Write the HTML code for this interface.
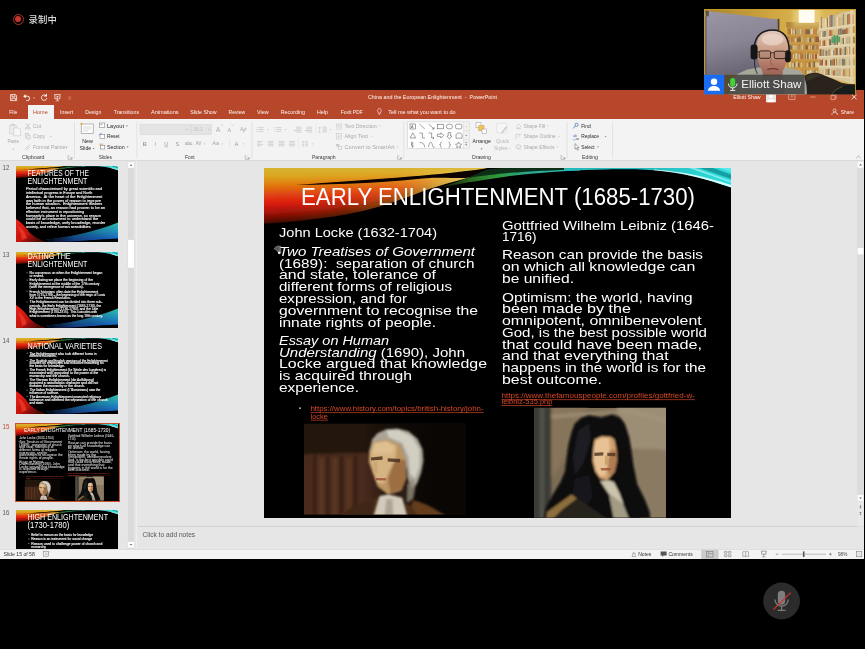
<!DOCTYPE html>
<html lang="en">
<head>
<meta charset="utf-8">
<title>China and the European Enlightenment - PowerPoint</title>
<style>
*{margin:0;padding:0;box-sizing:border-box}
html,body{width:865px;height:649px;background:#000;overflow:hidden}
body{position:relative;font-family:"Liberation Sans","Noto Sans CJK SC",sans-serif;color:#fff}
.abs{position:absolute}
svg{position:absolute;overflow:hidden;display:block}
svg text{font-family:"Liberation Sans","Noto Sans CJK SC",sans-serif}
#rec{left:12.8px;top:13.6px;width:11px;height:11px;border:1.2px solid #a9322b;border-radius:50%}
#rec i{position:absolute;left:1.3px;top:1.3px;width:6px;height:6px;border-radius:50%;background:#cb352e}
#rectxt{left:28.6px;top:12.5px;font-size:9.4px;line-height:13px;font-weight:500;color:#dcdcdc;letter-spacing:.1px;filter:blur(.25px)}
#win{left:0;top:90px;width:864px;height:469px;background:#e6e6e6;overflow:hidden}
#tbar{left:0;top:0;width:864px;height:29px;background:#b7472a}
#hometab{left:28px;top:15px;width:26px;height:15px;background:#f3f3f3}
#ribbon{left:0;top:29px;width:864px;height:42px;background:#f3f3f3;border-bottom:1px solid #d9d9d9}
#leftpane{left:0;top:71px;width:137px;height:388px;background:#e6e6e6;border-right:1px solid #efefef;overflow:hidden}
#lscroll{left:128px;top:72px;width:6px;height:387px;background:#dadada}
#rscroll{left:857px;top:71px;width:7px;height:366px;background:#dcdcdc}
#notes{left:138px;top:436px;width:726px;height:23px;background:#e6e6e6;border-top:1px solid #d2d2d2}
#status{left:0;top:459px;width:864px;height:10px;background:#f3f3f3;border-top:1px solid #dfdfdf}
#slide{left:264px;top:167.7px;width:467px;height:350.3px;background:#000;overflow:hidden}
#chrome{left:0;top:0;width:865px;height:649px}
.thumb{position:absolute;left:16px;width:102px;height:76px;background:#000;overflow:hidden}
.thumb .in{position:absolute;left:0;top:0;width:408px;height:304px;transform:scale(.25);transform-origin:0 0;color:#fff}
.thumb h3{position:absolute;font-weight:400;font-size:22px;line-height:24px;white-space:nowrap;transform-origin:0 0}
.thumb p,.thumb li{font-size:10.5px;line-height:11.6px;white-space:nowrap}
.thumb ul{list-style:none}
.num{position:absolute;left:3px;font-size:6.5px;color:#555;line-height:8px}
</style>
</head>
<body>
<!-- recording indicator -->
<div id="rec" class="abs"><i></i></div>
<div id="rectxt" class="abs">录制中</div>

<!-- PowerPoint window -->
<div id="win" class="abs">
  <div id="tbar" class="abs"></div>
  <div id="hometab" class="abs"></div>
  <div id="ribbon" class="abs"></div>
  <div id="leftpane" class="abs"></div>
  <div id="lscroll" class="abs"></div>
  <div id="rscroll" class="abs"></div>
  <div id="notes" class="abs"></div>
  <div id="status" class="abs"></div>
</div>

<!-- slide thumbnails -->
<svg class="thumbsvg" width="102" height="76" viewBox="0 0 102 76" style="left:16px;top:166px"><defs>
<linearGradient id="t12gB" gradientUnits="userSpaceOnUse" x1="20" y1="0" x2="223" y2="0">
 <stop offset="0" stop-color="#e39a1c" stop-opacity="0"/><stop offset=".3" stop-color="#e49c1e" stop-opacity=".12"/><stop offset=".55" stop-color="#e6a828" stop-opacity=".42"/><stop offset=".75" stop-color="#e8c444" stop-opacity=".8"/><stop offset=".9" stop-color="#ecd868" stop-opacity=".95"/><stop offset="1" stop-color="#e6e080" stop-opacity="1"/>
</linearGradient>
<linearGradient id="t12gG" gradientUnits="userSpaceOnUse" x1="176" y1="19" x2="316" y2="1">
 <stop offset="0" stop-color="#26300c" stop-opacity=".6"/><stop offset=".22" stop-color="#2c6a22"/><stop offset=".42" stop-color="#2f9a3c"/><stop offset=".62" stop-color="#2aa68a"/><stop offset="1" stop-color="#2fc6c4"/>
</linearGradient>
<linearGradient id="t12gC" gradientUnits="userSpaceOnUse" x1="380" y1="0" x2="467" y2="0">
 <stop offset="0" stop-color="#25b9bb"/><stop offset="1" stop-color="#2fdede"/>
</linearGradient>
<linearGradient id="t12gTop" gradientUnits="userSpaceOnUse" x1="0" y1="0" x2="0" y2="12">
 <stop offset="0" stop-color="#d8b534" stop-opacity=".85"/><stop offset="1" stop-color="#e2b030" stop-opacity="0"/>
</linearGradient>
<filter id="t12b1" x="-5%" y="-20%" width="110%" height="140%"><feGaussianBlur stdDeviation=".6"/></filter>
<filter id="t12b2" x="-10%" y="-10%" width="120%" height="120%"><feGaussianBlur stdDeviation="1.6"/></filter>
<filter id="t12b3" x="-10%" y="-10%" width="120%" height="120%"><feGaussianBlur stdDeviation="3"/></filter>
<clipPath id="t12cpS"><path d="M0,0 H223 L204,9.7 L183,15.6 L166,20.8 C155,24.6 146,28.4 135.4,32 C124,36 112,39.6 100.7,42.6 C88,45.6 78,47.4 66,49 L51.5,51 C40,52.6 20,54.8 0,55.6 Z"/></clipPath></defs><rect width="102" height="76" fill="#000"/><g transform="scale(.2184)"><g clip-path="url(#t12cpS)">
<rect x="-5" y="-5" width="240" height="70" fill="#2a0402"/>
<g filter="url(#t12b3)">
<path d="M-8,-8 H223 L223,0.00 L204,9.70 L183,15.60 L166,20.80 L135.4,32.00 L100.7,42.60 L66,49.00 L51.5,51.00 L25,53.80 L0,55.60 L-8,55.60 Z" fill="#4a0804" opacity="1"/>
<path d="M-8,-8 H223 L223,0.00 L204,9.12 L183,14.66 L166,19.55 L135.4,30.08 L100.7,40.04 L66,46.06 L51.5,47.94 L25,50.57 L0,52.26 L-8,52.26 Z" fill="#7a0e06" opacity="1"/>
<path d="M-8,-8 H223 L223,0.00 L204,8.15 L183,13.10 L166,17.47 L135.4,26.88 L100.7,35.78 L66,41.16 L51.5,42.84 L25,45.19 L0,46.70 L-8,46.70 Z" fill="#b0140a" opacity="1"/>
<path d="M-8,-8 H223 L223,0.00 L204,6.79 L183,10.92 L166,14.56 L135.4,22.40 L100.7,29.82 L66,34.30 L51.5,35.70 L25,37.66 L0,38.92 L-8,38.92 Z" fill="#e01b10" opacity="1"/>
<path d="M-8,-8 H223 L223,0.00 L204,5.33 L183,8.58 L166,11.44 L135.4,17.60 L100.7,23.43 L66,26.95 L51.5,28.05 L25,29.59 L0,30.58 L-8,30.58 Z" fill="#df3f12" opacity="1"/>
<path d="M-8,-8 H223 L223,0.00 L204,4.07 L183,6.55 L166,8.74 L135.4,13.44 L100.7,17.89 L66,20.58 L51.5,21.42 L25,22.60 L0,23.35 L-8,23.35 Z" fill="#e06c10" opacity="1"/>
<path d="M-8,-8 H223 L223,0.00 L204,2.72 L183,4.37 L166,5.82 L135.4,8.96 L100.7,11.93 L66,13.72 L51.5,14.28 L25,15.06 L0,15.57 L-8,15.57 Z" fill="#e09614" opacity="1"/>
<path d="M-8,-8 H223 L223,0.00 L204,1.45 L183,2.34 L166,3.12 L135.4,4.80 L100.7,6.39 L66,7.35 L51.5,7.65 L25,8.07 L0,8.34 L-8,8.34 Z" fill="#d2a81e" opacity="1"/>
</g>
<rect x="-5" y="-5" width="240" height="70" fill="url(#t12gB)"/>
<rect x="-5" y="-2" width="240" height="16" fill="url(#t12gTop)"/>
</g>
<g filter="url(#t12b1)">
<path d="M32,16.7 C45,16 55,15.3 66,14.5 C90,12.8 112,11.2 135,9.5 C150,8.3 164,7 176,6 C192,4.4 208,2.6 223,0.3 L240,0 L204,9.7 C198,10 192,10 187,10 C180,10 172,9.8 166,9.9 C156,10.6 146,11.6 135,12.7 C112,14.6 90,15.6 66,16.2 C55,16.5 45,16.8 32,16.8 Z" fill="#070503"/>
<path d="M204,9.7 L223,1.6 L240,0 L316,0 L316,1.2 C290,2.4 262,3.8 250,4.8 C232,6.2 218,8 204,9.7 Z" fill="#0c2e17"/>
<path d="M176,19.3 C200,15 225,11 246,8 C270,5 295,3.4 316,2.5 L316,1 C290,2.2 262,3.6 250,4.6 C232,6 218,7.8 204,9.7 C196,12.6 186,16 176,19.3 Z" fill="url(#t12gG)"/>
<path d="M300,0 L467,0 L467,19.6 C440,10.5 420,5.2 395,2.6 C372,0.9 360,1.2 343,1.4 C330,1.6 316,2.2 300,2.8 Z" fill="url(#t12gC)"/>
<path d="M390,2.2 C420,5 440,10.2 467,19.4 L467,17 C440,8.5 420,3.8 390,1.6 Z" fill="#e9ffff" opacity=".9"/>
<path d="M436,0 L467,11 L467,6.5 L449,0 Z" fill="#118f94" opacity=".8"/>
<path d="M455,0 L467,4 L467,0 Z" fill="#5fe8e8" opacity=".9"/>
<path d="M425,0 L467,14.5 L467,13 L431,0 Z" fill="#bff8f8" opacity=".6"/>
</g></g><defs>
<linearGradient id="t12r" gradientUnits="userSpaceOnUse" x1="0" y1="54" x2="22" y2="76"><stop offset="0" stop-color="#e8231a"/><stop offset=".55" stop-color="#c4140c"/><stop offset="1" stop-color="#4a0805"/></linearGradient>
<linearGradient id="t12b" gradientUnits="userSpaceOnUse" x1="0" y1="58" x2="0" y2="76"><stop offset="0" stop-color="#2fb9ae"/><stop offset=".45" stop-color="#1f8fc0"/><stop offset="1" stop-color="#1a4fc2"/></linearGradient>
<linearGradient id="t12f" gradientUnits="userSpaceOnUse" x1="28" y1="0" x2="102" y2="0"><stop offset="0" stop-color="#000" stop-opacity="1"/><stop offset=".4" stop-color="#000" stop-opacity=".35"/><stop offset="1" stop-color="#000" stop-opacity="0"/></linearGradient>
<filter id="t12bl" x="-10%" y="-10%" width="120%" height="120%"><feGaussianBlur stdDeviation=".45"/></filter>
</defs>
<g filter="url(#t12bl)">
<path d="M0,53 C5,56 9,60 13,66 C17,70 22,73 30,76 H0 Z" fill="url(#t12r)"/>
<path d="M2,60 C6,62 9,66 11,72 L6,74 C5,68 4,64 2,60 Z" fill="#ff4a3a" opacity=".55"/>
<path d="M30,73.5 C50,72 78,66 102,56.5 V73 C80,73 60,76 40,76 H32 Z" fill="url(#t12b)"/>
<path d="M30,73.5 C50,72 78,66 102,56.5 V76 H30 Z" fill="url(#t12f)"/>
<path d="M60,76 C78,74 92,73 102,72.4 V76 Z" fill="#000" opacity=".9"/>
</g><filter id="t12tb" x="-2%" y="-2%" width="104%" height="104%"><feGaussianBlur stdDeviation=".16"/></filter><g filter="url(#t12tb)"><text x="11.5" y="9.8" font-size="8.2" fill="#fff" textLength="61.5" lengthAdjust="spacingAndGlyphs">FEATURES OF THE</text><text x="11.5" y="17.5" font-size="8.2" fill="#fff" textLength="59.9" lengthAdjust="spacingAndGlyphs">ENLIGHTENMENT</text><text x="9.9" y="24.2" font-size="3.3" fill="#fff" textLength="76.4" lengthAdjust="spacingAndGlyphs" stroke="#fff" stroke-width=".1">Period characterised by great scientific and</text><text x="9.9" y="27.97" font-size="3.3" fill="#fff" textLength="66.3" lengthAdjust="spacingAndGlyphs" stroke="#fff" stroke-width=".1">intellectual progress in Europe and North</text><text x="9.9" y="31.74" font-size="3.3" fill="#fff" textLength="76.4" lengthAdjust="spacingAndGlyphs" stroke="#fff" stroke-width=".1">America.  At the heart of the Enlightenment</text><text x="9.9" y="35.51" font-size="3.3" fill="#fff" textLength="75.1" lengthAdjust="spacingAndGlyphs" stroke="#fff" stroke-width=".1">was faith in the power of reason to improve</text><text x="9.9" y="39.28" font-size="3.3" fill="#fff" textLength="76.4" lengthAdjust="spacingAndGlyphs" stroke="#fff" stroke-width=".1">the human situation.  Enlightenment thinkers</text><text x="9.9" y="43.05" font-size="3.3" fill="#fff" textLength="79.3" lengthAdjust="spacingAndGlyphs" stroke="#fff" stroke-width=".1">believed that, as reason had proven to be an</text><text x="9.9" y="46.82" font-size="3.3" fill="#fff" textLength="58.1" lengthAdjust="spacingAndGlyphs" stroke="#fff" stroke-width=".1">effective instrument in repositioning</text><text x="9.9" y="50.59" font-size="3.3" fill="#fff" textLength="75.1" lengthAdjust="spacingAndGlyphs" stroke="#fff" stroke-width=".1">humanity’s place in the universe, so reason</text><text x="9.9" y="54.36" font-size="3.3" fill="#fff" textLength="72.3" lengthAdjust="spacingAndGlyphs" stroke="#fff" stroke-width=".1">could be an instrument to understand the</text><text x="9.9" y="58.13" font-size="3.3" fill="#fff" textLength="79.3" lengthAdjust="spacingAndGlyphs" stroke="#fff" stroke-width=".1">basis of knowledge, unify knowledge, reorder</text><text x="9.9" y="61.9" font-size="3.3" fill="#fff" textLength="65.5" lengthAdjust="spacingAndGlyphs" stroke="#fff" stroke-width=".1">society, and refine human sensibilities.</text></g></svg>
<svg class="thumbsvg" width="102" height="76" viewBox="0 0 102 76" style="left:16px;top:252.3px"><defs>
<linearGradient id="t13gB" gradientUnits="userSpaceOnUse" x1="20" y1="0" x2="223" y2="0">
 <stop offset="0" stop-color="#e39a1c" stop-opacity="0"/><stop offset=".3" stop-color="#e49c1e" stop-opacity=".12"/><stop offset=".55" stop-color="#e6a828" stop-opacity=".42"/><stop offset=".75" stop-color="#e8c444" stop-opacity=".8"/><stop offset=".9" stop-color="#ecd868" stop-opacity=".95"/><stop offset="1" stop-color="#e6e080" stop-opacity="1"/>
</linearGradient>
<linearGradient id="t13gG" gradientUnits="userSpaceOnUse" x1="176" y1="19" x2="316" y2="1">
 <stop offset="0" stop-color="#26300c" stop-opacity=".6"/><stop offset=".22" stop-color="#2c6a22"/><stop offset=".42" stop-color="#2f9a3c"/><stop offset=".62" stop-color="#2aa68a"/><stop offset="1" stop-color="#2fc6c4"/>
</linearGradient>
<linearGradient id="t13gC" gradientUnits="userSpaceOnUse" x1="380" y1="0" x2="467" y2="0">
 <stop offset="0" stop-color="#25b9bb"/><stop offset="1" stop-color="#2fdede"/>
</linearGradient>
<linearGradient id="t13gTop" gradientUnits="userSpaceOnUse" x1="0" y1="0" x2="0" y2="12">
 <stop offset="0" stop-color="#d8b534" stop-opacity=".85"/><stop offset="1" stop-color="#e2b030" stop-opacity="0"/>
</linearGradient>
<filter id="t13b1" x="-5%" y="-20%" width="110%" height="140%"><feGaussianBlur stdDeviation=".6"/></filter>
<filter id="t13b2" x="-10%" y="-10%" width="120%" height="120%"><feGaussianBlur stdDeviation="1.6"/></filter>
<filter id="t13b3" x="-10%" y="-10%" width="120%" height="120%"><feGaussianBlur stdDeviation="3"/></filter>
<clipPath id="t13cpS"><path d="M0,0 H223 L204,9.7 L183,15.6 L166,20.8 C155,24.6 146,28.4 135.4,32 C124,36 112,39.6 100.7,42.6 C88,45.6 78,47.4 66,49 L51.5,51 C40,52.6 20,54.8 0,55.6 Z"/></clipPath></defs><rect width="102" height="76" fill="#000"/><g transform="scale(.2184)"><g clip-path="url(#t13cpS)">
<rect x="-5" y="-5" width="240" height="70" fill="#2a0402"/>
<g filter="url(#t13b3)">
<path d="M-8,-8 H223 L223,0.00 L204,9.70 L183,15.60 L166,20.80 L135.4,32.00 L100.7,42.60 L66,49.00 L51.5,51.00 L25,53.80 L0,55.60 L-8,55.60 Z" fill="#4a0804" opacity="1"/>
<path d="M-8,-8 H223 L223,0.00 L204,9.12 L183,14.66 L166,19.55 L135.4,30.08 L100.7,40.04 L66,46.06 L51.5,47.94 L25,50.57 L0,52.26 L-8,52.26 Z" fill="#7a0e06" opacity="1"/>
<path d="M-8,-8 H223 L223,0.00 L204,8.15 L183,13.10 L166,17.47 L135.4,26.88 L100.7,35.78 L66,41.16 L51.5,42.84 L25,45.19 L0,46.70 L-8,46.70 Z" fill="#b0140a" opacity="1"/>
<path d="M-8,-8 H223 L223,0.00 L204,6.79 L183,10.92 L166,14.56 L135.4,22.40 L100.7,29.82 L66,34.30 L51.5,35.70 L25,37.66 L0,38.92 L-8,38.92 Z" fill="#e01b10" opacity="1"/>
<path d="M-8,-8 H223 L223,0.00 L204,5.33 L183,8.58 L166,11.44 L135.4,17.60 L100.7,23.43 L66,26.95 L51.5,28.05 L25,29.59 L0,30.58 L-8,30.58 Z" fill="#df3f12" opacity="1"/>
<path d="M-8,-8 H223 L223,0.00 L204,4.07 L183,6.55 L166,8.74 L135.4,13.44 L100.7,17.89 L66,20.58 L51.5,21.42 L25,22.60 L0,23.35 L-8,23.35 Z" fill="#e06c10" opacity="1"/>
<path d="M-8,-8 H223 L223,0.00 L204,2.72 L183,4.37 L166,5.82 L135.4,8.96 L100.7,11.93 L66,13.72 L51.5,14.28 L25,15.06 L0,15.57 L-8,15.57 Z" fill="#e09614" opacity="1"/>
<path d="M-8,-8 H223 L223,0.00 L204,1.45 L183,2.34 L166,3.12 L135.4,4.80 L100.7,6.39 L66,7.35 L51.5,7.65 L25,8.07 L0,8.34 L-8,8.34 Z" fill="#d2a81e" opacity="1"/>
</g>
<rect x="-5" y="-5" width="240" height="70" fill="url(#t13gB)"/>
<rect x="-5" y="-2" width="240" height="16" fill="url(#t13gTop)"/>
</g>
<g filter="url(#t13b1)">
<path d="M32,16.7 C45,16 55,15.3 66,14.5 C90,12.8 112,11.2 135,9.5 C150,8.3 164,7 176,6 C192,4.4 208,2.6 223,0.3 L240,0 L204,9.7 C198,10 192,10 187,10 C180,10 172,9.8 166,9.9 C156,10.6 146,11.6 135,12.7 C112,14.6 90,15.6 66,16.2 C55,16.5 45,16.8 32,16.8 Z" fill="#070503"/>
<path d="M204,9.7 L223,1.6 L240,0 L316,0 L316,1.2 C290,2.4 262,3.8 250,4.8 C232,6.2 218,8 204,9.7 Z" fill="#0c2e17"/>
<path d="M176,19.3 C200,15 225,11 246,8 C270,5 295,3.4 316,2.5 L316,1 C290,2.2 262,3.6 250,4.6 C232,6 218,7.8 204,9.7 C196,12.6 186,16 176,19.3 Z" fill="url(#t13gG)"/>
<path d="M300,0 L467,0 L467,19.6 C440,10.5 420,5.2 395,2.6 C372,0.9 360,1.2 343,1.4 C330,1.6 316,2.2 300,2.8 Z" fill="url(#t13gC)"/>
<path d="M390,2.2 C420,5 440,10.2 467,19.4 L467,17 C440,8.5 420,3.8 390,1.6 Z" fill="#e9ffff" opacity=".9"/>
<path d="M436,0 L467,11 L467,6.5 L449,0 Z" fill="#118f94" opacity=".8"/>
<path d="M455,0 L467,4 L467,0 Z" fill="#5fe8e8" opacity=".9"/>
<path d="M425,0 L467,14.5 L467,13 L431,0 Z" fill="#bff8f8" opacity=".6"/>
</g></g><defs>
<linearGradient id="t13r" gradientUnits="userSpaceOnUse" x1="0" y1="54" x2="22" y2="76"><stop offset="0" stop-color="#e8231a"/><stop offset=".55" stop-color="#c4140c"/><stop offset="1" stop-color="#4a0805"/></linearGradient>
<linearGradient id="t13b" gradientUnits="userSpaceOnUse" x1="0" y1="58" x2="0" y2="76"><stop offset="0" stop-color="#2fb9ae"/><stop offset=".45" stop-color="#1f8fc0"/><stop offset="1" stop-color="#1a4fc2"/></linearGradient>
<linearGradient id="t13f" gradientUnits="userSpaceOnUse" x1="28" y1="0" x2="102" y2="0"><stop offset="0" stop-color="#000" stop-opacity="1"/><stop offset=".4" stop-color="#000" stop-opacity=".35"/><stop offset="1" stop-color="#000" stop-opacity="0"/></linearGradient>
<filter id="t13bl" x="-10%" y="-10%" width="120%" height="120%"><feGaussianBlur stdDeviation=".45"/></filter>
</defs>
<g filter="url(#t13bl)">
<path d="M0,53 C5,56 9,60 13,66 C17,70 22,73 30,76 H0 Z" fill="url(#t13r)"/>
<path d="M2,60 C6,62 9,66 11,72 L6,74 C5,68 4,64 2,60 Z" fill="#ff4a3a" opacity=".55"/>
<path d="M30,73.5 C50,72 78,66 102,56.5 V73 C80,73 60,76 40,76 H32 Z" fill="url(#t13b)"/>
<path d="M30,73.5 C50,72 78,66 102,56.5 V76 H30 Z" fill="url(#t13f)"/>
<path d="M60,76 C78,74 92,73 102,72.4 V76 Z" fill="#000" opacity=".9"/>
</g><filter id="t13tb" x="-2%" y="-2%" width="104%" height="104%"><feGaussianBlur stdDeviation=".16"/></filter><g filter="url(#t13tb)"><text x="11.5" y="7.3" font-size="8.2" fill="#fff" textLength="43.2" lengthAdjust="spacingAndGlyphs">DATING THE</text><text x="11.5" y="14.9" font-size="8.2" fill="#fff" textLength="59.9" lengthAdjust="spacingAndGlyphs">ENLIGHTENMENT</text><text x="13.6" y="22.1" font-size="3" fill="#fff" textLength="72.7" lengthAdjust="spacingAndGlyphs" stroke="#fff" stroke-width=".1">No consensus on when the Enlightenment began</text><text x="13.6" y="25.1" font-size="3" fill="#fff" textLength="14.4" lengthAdjust="spacingAndGlyphs" stroke="#fff" stroke-width=".1">or ended.</text><text x="13.6" y="29.4" font-size="3" fill="#fff" textLength="63.4" lengthAdjust="spacingAndGlyphs" stroke="#fff" stroke-width=".1">Early dating we place the beginning of the</text><text x="13.6" y="32.8" font-size="3" fill="#fff" textLength="69.9" lengthAdjust="spacingAndGlyphs" stroke="#fff" stroke-width=".1">Enlightenment at the middle of the 17th century</text><text x="13.6" y="36.2" font-size="3" fill="#fff" textLength="54.1" lengthAdjust="spacingAndGlyphs" stroke="#fff" stroke-width=".1">(with the emergence of rationalism).</text><text x="13.6" y="40.5" font-size="3" fill="#fff" textLength="68.6" lengthAdjust="spacingAndGlyphs" stroke="#fff" stroke-width=".1">French historians often date the Enlightenment</text><text x="13.6" y="43.8" font-size="3" fill="#fff" textLength="75.6" lengthAdjust="spacingAndGlyphs" stroke="#fff" stroke-width=".1">from 1715-1789 – the beginning of the reign of Louis</text><text x="13.6" y="47.1" font-size="3" fill="#fff" textLength="41.1" lengthAdjust="spacingAndGlyphs" stroke="#fff" stroke-width=".1">XV to the French Revolution.</text><text x="13.6" y="51.3" font-size="3" fill="#fff" textLength="72.7" lengthAdjust="spacingAndGlyphs" stroke="#fff" stroke-width=".1">The Enlightenment can be divided into three sub-</text><text x="13.6" y="54.7" font-size="3" fill="#fff" textLength="71.5" lengthAdjust="spacingAndGlyphs" stroke="#fff" stroke-width=".1">periods, the Early Enlightenment (1685-1730), the</text><text x="13.6" y="57.9" font-size="3" fill="#fff" textLength="68.6" lengthAdjust="spacingAndGlyphs" stroke="#fff" stroke-width=".1">High Enlightenment (1730-1780), and the Late</text><text x="13.6" y="61.1" font-size="3" fill="#fff" textLength="67.4" lengthAdjust="spacingAndGlyphs" stroke="#fff" stroke-width=".1">Enlightenment (1780-1815).  This coincides with</text><text x="13.6" y="64.7" font-size="3" fill="#fff" textLength="73.2" lengthAdjust="spacingAndGlyphs" stroke="#fff" stroke-width=".1">what is sometimes known as the long 18th century.</text><rect x="10.7" y="20.4" width=".8" height=".8" fill="#eee"/><rect x="10.7" y="27.7" width=".8" height=".8" fill="#eee"/><rect x="10.7" y="38.8" width=".8" height=".8" fill="#eee"/><rect x="10.7" y="49.6" width=".8" height=".8" fill="#eee"/></g></svg>
<svg class="thumbsvg" width="102" height="76" viewBox="0 0 102 76" style="left:16px;top:338.1px"><defs>
<linearGradient id="t14gB" gradientUnits="userSpaceOnUse" x1="20" y1="0" x2="223" y2="0">
 <stop offset="0" stop-color="#e39a1c" stop-opacity="0"/><stop offset=".3" stop-color="#e49c1e" stop-opacity=".12"/><stop offset=".55" stop-color="#e6a828" stop-opacity=".42"/><stop offset=".75" stop-color="#e8c444" stop-opacity=".8"/><stop offset=".9" stop-color="#ecd868" stop-opacity=".95"/><stop offset="1" stop-color="#e6e080" stop-opacity="1"/>
</linearGradient>
<linearGradient id="t14gG" gradientUnits="userSpaceOnUse" x1="176" y1="19" x2="316" y2="1">
 <stop offset="0" stop-color="#26300c" stop-opacity=".6"/><stop offset=".22" stop-color="#2c6a22"/><stop offset=".42" stop-color="#2f9a3c"/><stop offset=".62" stop-color="#2aa68a"/><stop offset="1" stop-color="#2fc6c4"/>
</linearGradient>
<linearGradient id="t14gC" gradientUnits="userSpaceOnUse" x1="380" y1="0" x2="467" y2="0">
 <stop offset="0" stop-color="#25b9bb"/><stop offset="1" stop-color="#2fdede"/>
</linearGradient>
<linearGradient id="t14gTop" gradientUnits="userSpaceOnUse" x1="0" y1="0" x2="0" y2="12">
 <stop offset="0" stop-color="#d8b534" stop-opacity=".85"/><stop offset="1" stop-color="#e2b030" stop-opacity="0"/>
</linearGradient>
<filter id="t14b1" x="-5%" y="-20%" width="110%" height="140%"><feGaussianBlur stdDeviation=".6"/></filter>
<filter id="t14b2" x="-10%" y="-10%" width="120%" height="120%"><feGaussianBlur stdDeviation="1.6"/></filter>
<filter id="t14b3" x="-10%" y="-10%" width="120%" height="120%"><feGaussianBlur stdDeviation="3"/></filter>
<clipPath id="t14cpS"><path d="M0,0 H223 L204,9.7 L183,15.6 L166,20.8 C155,24.6 146,28.4 135.4,32 C124,36 112,39.6 100.7,42.6 C88,45.6 78,47.4 66,49 L51.5,51 C40,52.6 20,54.8 0,55.6 Z"/></clipPath></defs><rect width="102" height="76" fill="#000"/><g transform="scale(.2184)"><g clip-path="url(#t14cpS)">
<rect x="-5" y="-5" width="240" height="70" fill="#2a0402"/>
<g filter="url(#t14b3)">
<path d="M-8,-8 H223 L223,0.00 L204,9.70 L183,15.60 L166,20.80 L135.4,32.00 L100.7,42.60 L66,49.00 L51.5,51.00 L25,53.80 L0,55.60 L-8,55.60 Z" fill="#4a0804" opacity="1"/>
<path d="M-8,-8 H223 L223,0.00 L204,9.12 L183,14.66 L166,19.55 L135.4,30.08 L100.7,40.04 L66,46.06 L51.5,47.94 L25,50.57 L0,52.26 L-8,52.26 Z" fill="#7a0e06" opacity="1"/>
<path d="M-8,-8 H223 L223,0.00 L204,8.15 L183,13.10 L166,17.47 L135.4,26.88 L100.7,35.78 L66,41.16 L51.5,42.84 L25,45.19 L0,46.70 L-8,46.70 Z" fill="#b0140a" opacity="1"/>
<path d="M-8,-8 H223 L223,0.00 L204,6.79 L183,10.92 L166,14.56 L135.4,22.40 L100.7,29.82 L66,34.30 L51.5,35.70 L25,37.66 L0,38.92 L-8,38.92 Z" fill="#e01b10" opacity="1"/>
<path d="M-8,-8 H223 L223,0.00 L204,5.33 L183,8.58 L166,11.44 L135.4,17.60 L100.7,23.43 L66,26.95 L51.5,28.05 L25,29.59 L0,30.58 L-8,30.58 Z" fill="#df3f12" opacity="1"/>
<path d="M-8,-8 H223 L223,0.00 L204,4.07 L183,6.55 L166,8.74 L135.4,13.44 L100.7,17.89 L66,20.58 L51.5,21.42 L25,22.60 L0,23.35 L-8,23.35 Z" fill="#e06c10" opacity="1"/>
<path d="M-8,-8 H223 L223,0.00 L204,2.72 L183,4.37 L166,5.82 L135.4,8.96 L100.7,11.93 L66,13.72 L51.5,14.28 L25,15.06 L0,15.57 L-8,15.57 Z" fill="#e09614" opacity="1"/>
<path d="M-8,-8 H223 L223,0.00 L204,1.45 L183,2.34 L166,3.12 L135.4,4.80 L100.7,6.39 L66,7.35 L51.5,7.65 L25,8.07 L0,8.34 L-8,8.34 Z" fill="#d2a81e" opacity="1"/>
</g>
<rect x="-5" y="-5" width="240" height="70" fill="url(#t14gB)"/>
<rect x="-5" y="-2" width="240" height="16" fill="url(#t14gTop)"/>
</g>
<g filter="url(#t14b1)">
<path d="M32,16.7 C45,16 55,15.3 66,14.5 C90,12.8 112,11.2 135,9.5 C150,8.3 164,7 176,6 C192,4.4 208,2.6 223,0.3 L240,0 L204,9.7 C198,10 192,10 187,10 C180,10 172,9.8 166,9.9 C156,10.6 146,11.6 135,12.7 C112,14.6 90,15.6 66,16.2 C55,16.5 45,16.8 32,16.8 Z" fill="#070503"/>
<path d="M204,9.7 L223,1.6 L240,0 L316,0 L316,1.2 C290,2.4 262,3.8 250,4.8 C232,6.2 218,8 204,9.7 Z" fill="#0c2e17"/>
<path d="M176,19.3 C200,15 225,11 246,8 C270,5 295,3.4 316,2.5 L316,1 C290,2.2 262,3.6 250,4.6 C232,6 218,7.8 204,9.7 C196,12.6 186,16 176,19.3 Z" fill="url(#t14gG)"/>
<path d="M300,0 L467,0 L467,19.6 C440,10.5 420,5.2 395,2.6 C372,0.9 360,1.2 343,1.4 C330,1.6 316,2.2 300,2.8 Z" fill="url(#t14gC)"/>
<path d="M390,2.2 C420,5 440,10.2 467,19.4 L467,17 C440,8.5 420,3.8 390,1.6 Z" fill="#e9ffff" opacity=".9"/>
<path d="M436,0 L467,11 L467,6.5 L449,0 Z" fill="#118f94" opacity=".8"/>
<path d="M455,0 L467,4 L467,0 Z" fill="#5fe8e8" opacity=".9"/>
<path d="M425,0 L467,14.5 L467,13 L431,0 Z" fill="#bff8f8" opacity=".6"/>
</g></g><defs>
<linearGradient id="t14r" gradientUnits="userSpaceOnUse" x1="0" y1="54" x2="22" y2="76"><stop offset="0" stop-color="#e8231a"/><stop offset=".55" stop-color="#c4140c"/><stop offset="1" stop-color="#4a0805"/></linearGradient>
<linearGradient id="t14b" gradientUnits="userSpaceOnUse" x1="0" y1="58" x2="0" y2="76"><stop offset="0" stop-color="#2fb9ae"/><stop offset=".45" stop-color="#1f8fc0"/><stop offset="1" stop-color="#1a4fc2"/></linearGradient>
<linearGradient id="t14f" gradientUnits="userSpaceOnUse" x1="28" y1="0" x2="102" y2="0"><stop offset="0" stop-color="#000" stop-opacity="1"/><stop offset=".4" stop-color="#000" stop-opacity=".35"/><stop offset="1" stop-color="#000" stop-opacity="0"/></linearGradient>
<filter id="t14bl" x="-10%" y="-10%" width="120%" height="120%"><feGaussianBlur stdDeviation=".45"/></filter>
</defs>
<g filter="url(#t14bl)">
<path d="M0,53 C5,56 9,60 13,66 C17,70 22,73 30,76 H0 Z" fill="url(#t14r)"/>
<path d="M2,60 C6,62 9,66 11,72 L6,74 C5,68 4,64 2,60 Z" fill="#ff4a3a" opacity=".55"/>
<path d="M30,73.5 C50,72 78,66 102,56.5 V73 C80,73 60,76 40,76 H32 Z" fill="url(#t14b)"/>
<path d="M30,73.5 C50,72 78,66 102,56.5 V76 H30 Z" fill="url(#t14f)"/>
<path d="M60,76 C78,74 92,73 102,72.4 V76 Z" fill="#000" opacity=".9"/>
</g><filter id="t14tb" x="-2%" y="-2%" width="104%" height="104%"><feGaussianBlur stdDeviation=".16"/></filter><g filter="url(#t14tb)"><text x="11.5" y="10.9" font-size="8.2" fill="#fff" textLength="74.5" lengthAdjust="spacingAndGlyphs">NATIONAL VARIETIES</text><text x="13.6" y="16.5" font-size="2.75" fill="#fff" textLength="67" lengthAdjust="spacingAndGlyphs" stroke="#fff" stroke-width=".1">The Enlightenment also took different forms in</text><text x="13.6" y="19.1" font-size="2.75" fill="#fff" textLength="27" lengthAdjust="spacingAndGlyphs" stroke="#fff" stroke-width=".1">different countries.</text><text x="13.6" y="23.7" font-size="2.75" fill="#fff" textLength="78" lengthAdjust="spacingAndGlyphs" stroke="#fff" stroke-width=".1">The Scottish and English versions of the Enlightenment</text><text x="13.6" y="26.4" font-size="2.75" fill="#fff" textLength="74" lengthAdjust="spacingAndGlyphs" stroke="#fff" stroke-width=".1">focused on empiricism and inductive reasoning as</text><text x="13.6" y="29.1" font-size="2.75" fill="#fff" textLength="35.1" lengthAdjust="spacingAndGlyphs" stroke="#fff" stroke-width=".1">the basis for knowledge.</text><text x="13.6" y="33.2" font-size="2.75" fill="#fff" textLength="76.4" lengthAdjust="spacingAndGlyphs" stroke="#fff" stroke-width=".1">The French Enlightenment (Le Siècle des Lumières) is</text><text x="13.6" y="36.1" font-size="2.75" fill="#fff" textLength="68.6" lengthAdjust="spacingAndGlyphs" stroke="#fff" stroke-width=".1">associated with opposition to the power of the</text><text x="13.6" y="38.8" font-size="2.75" fill="#fff" textLength="40" lengthAdjust="spacingAndGlyphs" stroke="#fff" stroke-width=".1">monarchy and the church.</text><text x="13.6" y="43.2" font-size="2.75" fill="#fff" textLength="64.3" lengthAdjust="spacingAndGlyphs" stroke="#fff" stroke-width=".1">The German Enlightenment (die Aufklärung)</text><text x="13.6" y="46.1" font-size="2.75" fill="#fff" textLength="68.6" lengthAdjust="spacingAndGlyphs" stroke="#fff" stroke-width=".1">acquired a nationalistic character and did not</text><text x="13.6" y="48.8" font-size="2.75" fill="#fff" textLength="55.4" lengthAdjust="spacingAndGlyphs" stroke="#fff" stroke-width=".1">threaten the monarchy or the church.</text><text x="13.6" y="53.4" font-size="2.75" fill="#fff" textLength="70.7" lengthAdjust="spacingAndGlyphs" stroke="#fff" stroke-width=".1">The Italian Enlightenment (L’Illuminismo) saw the</text><text x="13.6" y="55.8" font-size="2.75" fill="#fff" textLength="29.4" lengthAdjust="spacingAndGlyphs" stroke="#fff" stroke-width=".1">influence of science.</text><text x="13.6" y="59.9" font-size="2.75" fill="#fff" textLength="71.5" lengthAdjust="spacingAndGlyphs" stroke="#fff" stroke-width=".1">The American Enlightenment promoted religious</text><text x="13.6" y="62.7" font-size="2.75" fill="#fff" textLength="78" lengthAdjust="spacingAndGlyphs" stroke="#fff" stroke-width=".1">tolerance and affirmed the separation of the church</text><text x="13.6" y="65.5" font-size="2.75" fill="#fff" textLength="14.1" lengthAdjust="spacingAndGlyphs" stroke="#fff" stroke-width=".1">and state.</text><rect x="10.7" y="14.8" width=".8" height=".8" fill="#eee"/><rect x="10.7" y="22" width=".8" height=".8" fill="#eee"/><rect x="10.7" y="31.5" width=".8" height=".8" fill="#eee"/><rect x="10.7" y="41.5" width=".8" height=".8" fill="#eee"/><rect x="10.7" y="51.7" width=".8" height=".8" fill="#eee"/><rect x="10.7" y="58.2" width=".8" height=".8" fill="#eee"/></g></svg>
<div class="abs" style="left:14.5px;top:422.8px;width:105px;height:78.8px;border:1.6px solid #c9532c;background:#000"></div>
<svg id="minislide" width="102" height="76.6" viewBox="0 0 467 351" preserveAspectRatio="none" style="left:16px;top:424px">
<defs>
<linearGradient id="mgB" gradientUnits="userSpaceOnUse" x1="20" y1="0" x2="223" y2="0">
 <stop offset="0" stop-color="#e39a1c" stop-opacity="0"/><stop offset=".3" stop-color="#e49c1e" stop-opacity=".12"/><stop offset=".55" stop-color="#e6a828" stop-opacity=".42"/><stop offset=".75" stop-color="#e8c444" stop-opacity=".8"/><stop offset=".9" stop-color="#ecd868" stop-opacity=".95"/><stop offset="1" stop-color="#e6e080" stop-opacity="1"/>
</linearGradient>
<linearGradient id="mgG" gradientUnits="userSpaceOnUse" x1="176" y1="19" x2="316" y2="1">
 <stop offset="0" stop-color="#26300c" stop-opacity=".6"/><stop offset=".22" stop-color="#2c6a22"/><stop offset=".42" stop-color="#2f9a3c"/><stop offset=".62" stop-color="#2aa68a"/><stop offset="1" stop-color="#2fc6c4"/>
</linearGradient>
<linearGradient id="mgC" gradientUnits="userSpaceOnUse" x1="380" y1="0" x2="467" y2="0">
 <stop offset="0" stop-color="#25b9bb"/><stop offset="1" stop-color="#2fdede"/>
</linearGradient>
<linearGradient id="mgTop" gradientUnits="userSpaceOnUse" x1="0" y1="0" x2="0" y2="12">
 <stop offset="0" stop-color="#d8b534" stop-opacity=".85"/><stop offset="1" stop-color="#e2b030" stop-opacity="0"/>
</linearGradient>
<filter id="mb1" x="-5%" y="-20%" width="110%" height="140%"><feGaussianBlur stdDeviation=".6"/></filter>
<filter id="mb2" x="-10%" y="-10%" width="120%" height="120%"><feGaussianBlur stdDeviation="1.6"/></filter>
<filter id="mb3" x="-10%" y="-10%" width="120%" height="120%"><feGaussianBlur stdDeviation="3"/></filter>
<clipPath id="mcpS"><path d="M0,0 H223 L204,9.7 L183,15.6 L166,20.8 C155,24.6 146,28.4 135.4,32 C124,36 112,39.6 100.7,42.6 C88,45.6 78,47.4 66,49 L51.5,51 C40,52.6 20,54.8 0,55.6 Z"/></clipPath>
<filter id="mtb" x="-2%" y="-10%" width="104%" height="120%"><feGaussianBlur stdDeviation=".28"/></filter>
<clipPath id="mcpL"><rect x="40" y="257" width="162" height="91"/></clipPath>
<clipPath id="mcpR"><rect x="270" y="241" width="132" height="110"/></clipPath>
</defs>
<rect width="467" height="351" fill="#000"/>
<g clip-path="url(#mcpS)">
<rect x="-5" y="-5" width="240" height="70" fill="#2a0402"/>
<g filter="url(#mb3)">
<path d="M-8,-8 H223 L223,0.00 L204,9.70 L183,15.60 L166,20.80 L135.4,32.00 L100.7,42.60 L66,49.00 L51.5,51.00 L25,53.80 L0,55.60 L-8,55.60 Z" fill="#4a0804" opacity="1"/>
<path d="M-8,-8 H223 L223,0.00 L204,9.12 L183,14.66 L166,19.55 L135.4,30.08 L100.7,40.04 L66,46.06 L51.5,47.94 L25,50.57 L0,52.26 L-8,52.26 Z" fill="#7a0e06" opacity="1"/>
<path d="M-8,-8 H223 L223,0.00 L204,8.15 L183,13.10 L166,17.47 L135.4,26.88 L100.7,35.78 L66,41.16 L51.5,42.84 L25,45.19 L0,46.70 L-8,46.70 Z" fill="#b0140a" opacity="1"/>
<path d="M-8,-8 H223 L223,0.00 L204,6.79 L183,10.92 L166,14.56 L135.4,22.40 L100.7,29.82 L66,34.30 L51.5,35.70 L25,37.66 L0,38.92 L-8,38.92 Z" fill="#e01b10" opacity="1"/>
<path d="M-8,-8 H223 L223,0.00 L204,5.33 L183,8.58 L166,11.44 L135.4,17.60 L100.7,23.43 L66,26.95 L51.5,28.05 L25,29.59 L0,30.58 L-8,30.58 Z" fill="#df3f12" opacity="1"/>
<path d="M-8,-8 H223 L223,0.00 L204,4.07 L183,6.55 L166,8.74 L135.4,13.44 L100.7,17.89 L66,20.58 L51.5,21.42 L25,22.60 L0,23.35 L-8,23.35 Z" fill="#e06c10" opacity="1"/>
<path d="M-8,-8 H223 L223,0.00 L204,2.72 L183,4.37 L166,5.82 L135.4,8.96 L100.7,11.93 L66,13.72 L51.5,14.28 L25,15.06 L0,15.57 L-8,15.57 Z" fill="#e09614" opacity="1"/>
<path d="M-8,-8 H223 L223,0.00 L204,1.45 L183,2.34 L166,3.12 L135.4,4.80 L100.7,6.39 L66,7.35 L51.5,7.65 L25,8.07 L0,8.34 L-8,8.34 Z" fill="#d2a81e" opacity="1"/>
</g>
<rect x="-5" y="-5" width="240" height="70" fill="url(#mgB)"/>
<rect x="-5" y="-2" width="240" height="16" fill="url(#mgTop)"/>
</g>
<g filter="url(#mb1)">
<path d="M32,16.7 C45,16 55,15.3 66,14.5 C90,12.8 112,11.2 135,9.5 C150,8.3 164,7 176,6 C192,4.4 208,2.6 223,0.3 L240,0 L204,9.7 C198,10 192,10 187,10 C180,10 172,9.8 166,9.9 C156,10.6 146,11.6 135,12.7 C112,14.6 90,15.6 66,16.2 C55,16.5 45,16.8 32,16.8 Z" fill="#070503"/>
<path d="M204,9.7 L223,1.6 L240,0 L316,0 L316,1.2 C290,2.4 262,3.8 250,4.8 C232,6.2 218,8 204,9.7 Z" fill="#0c2e17"/>
<path d="M176,19.3 C200,15 225,11 246,8 C270,5 295,3.4 316,2.5 L316,1 C290,2.2 262,3.6 250,4.6 C232,6 218,7.8 204,9.7 C196,12.6 186,16 176,19.3 Z" fill="url(#mgG)"/>
<path d="M300,0 L467,0 L467,19.6 C440,10.5 420,5.2 395,2.6 C372,0.9 360,1.2 343,1.4 C330,1.6 316,2.2 300,2.8 Z" fill="url(#mgC)"/>
<path d="M390,2.2 C420,5 440,10.2 467,19.4 L467,17 C440,8.5 420,3.8 390,1.6 Z" fill="#e9ffff" opacity=".9"/>
<path d="M436,0 L467,11 L467,6.5 L449,0 Z" fill="#118f94" opacity=".8"/>
<path d="M455,0 L467,4 L467,0 Z" fill="#5fe8e8" opacity=".9"/>
<path d="M425,0 L467,14.5 L467,13 L431,0 Z" fill="#bff8f8" opacity=".6"/>
</g>
<g transform="translate(0,-.7)"><g filter="url(#mtb)">
<text x="37" y="37.6" font-size="23.3" fill="#fff" textLength="394" lengthAdjust="spacingAndGlyphs">EARLY ENLIGHTENMENT (1685-1730)</text>
<text x="15" y="70" font-size="13.2" fill="#fff" textLength="158" lengthAdjust="spacingAndGlyphs">John Locke (1632-1704)</text>
<text x="15" y="88.6" font-size="13.2" fill="#fff" textLength="196" lengthAdjust="spacingAndGlyphs" font-style="italic">Two Treatises of Government</text>
<text x="15" y="100.5" font-size="13.2" fill="#fff" textLength="195.5" lengthAdjust="spacingAndGlyphs">(1689):  separation of church</text>
<text x="15" y="112.3" font-size="13.2" fill="#fff" textLength="157" lengthAdjust="spacingAndGlyphs">and state, tolerance of</text>
<text x="15" y="124.2" font-size="13.2" fill="#fff" textLength="173" lengthAdjust="spacingAndGlyphs">different forms of religious</text>
<text x="15" y="136" font-size="13.2" fill="#fff" textLength="128" lengthAdjust="spacingAndGlyphs">expression, and for</text>
<text x="15" y="147.8" font-size="13.2" fill="#fff" textLength="199" lengthAdjust="spacingAndGlyphs">government to recognise the</text>
<text x="15" y="159.6" font-size="13.2" fill="#fff" textLength="157" lengthAdjust="spacingAndGlyphs">innate rights of people.</text>
<text x="15" y="178" font-size="13.2" fill="#fff" textLength="110" lengthAdjust="spacingAndGlyphs" font-style="italic">Essay on Human</text>
<text x="15" y="189.8" font-size="13.2" fill="#fff" textLength="186" lengthAdjust="spacingAndGlyphs"><tspan font-style="italic">Understanding</tspan> (1690), John</text>
<text x="15" y="201.6" font-size="13.2" fill="#fff" textLength="208" lengthAdjust="spacingAndGlyphs">Locke argued that knowledge</text>
<text x="15" y="213.5" font-size="13.2" fill="#fff" textLength="133" lengthAdjust="spacingAndGlyphs">is acquired through</text>
<text x="15" y="225.3" font-size="13.2" fill="#fff" textLength="80" lengthAdjust="spacingAndGlyphs">experience.</text>
<text x="238" y="62.4" font-size="13.2" fill="#fff" textLength="212" lengthAdjust="spacingAndGlyphs">Gottfried Wilhelm Leibniz (1646-</text>
<text x="238" y="74" font-size="13.2" fill="#fff" textLength="34.6" lengthAdjust="spacingAndGlyphs">1716)</text>
<text x="238" y="92.3" font-size="13.2" fill="#fff" textLength="201" lengthAdjust="spacingAndGlyphs">Reason can provide the basis</text>
<text x="238" y="104" font-size="13.2" fill="#fff" textLength="193.3" lengthAdjust="spacingAndGlyphs">on which all knowledge can</text>
<text x="238" y="115.7" font-size="13.2" fill="#fff" textLength="72" lengthAdjust="spacingAndGlyphs">be unified.</text>
<text x="238" y="134.5" font-size="13.2" fill="#fff" textLength="190.6" lengthAdjust="spacingAndGlyphs">Optimism: the world, having</text>
<text x="238" y="146.2" font-size="13.2" fill="#fff" textLength="129" lengthAdjust="spacingAndGlyphs">been made by the</text>
<text x="238" y="158" font-size="13.2" fill="#fff" textLength="199.7" lengthAdjust="spacingAndGlyphs">omnipotent, omnibenevolent</text>
<text x="238" y="169.8" font-size="13.2" fill="#fff" textLength="205" lengthAdjust="spacingAndGlyphs">God, is the best possible world</text>
<text x="238" y="181.6" font-size="13.2" fill="#fff" textLength="200" lengthAdjust="spacingAndGlyphs">that could have been made,</text>
<text x="238" y="193.4" font-size="13.2" fill="#fff" textLength="166.6" lengthAdjust="spacingAndGlyphs">and that everything that</text>
<text x="238" y="205.2" font-size="13.2" fill="#fff" textLength="204" lengthAdjust="spacingAndGlyphs">happens in the world is for the</text>
<text x="238" y="217" font-size="13.2" fill="#fff" textLength="100" lengthAdjust="spacingAndGlyphs">best outcome.</text>
<rect x="35.2" y="240.6" width="1.5" height="1.5" fill="#ddd"/>
<text x="46.5" y="244.6" font-size="6.6" fill="#d8482a" textLength="173" lengthAdjust="spacingAndGlyphs" text-decoration="underline">https://www.history.com/topics/british-history/john-</text>
<text x="46.5" y="252" font-size="6.6" fill="#d8482a" textLength="17.5" lengthAdjust="spacingAndGlyphs" text-decoration="underline">locke</text>
<text x="237.5" y="231.6" font-size="6.6" fill="#d8482a" textLength="193.5" lengthAdjust="spacingAndGlyphs" text-decoration="underline">https://www.thefamouspeople.com/profiles/gottfried-w-</text>
<text x="237.5" y="237.2" font-size="6.6" fill="#d8482a" textLength="51" lengthAdjust="spacingAndGlyphs" text-decoration="underline">leibniz-535.php</text>
</g>
<g clip-path="url(#mcpL)">
<defs><linearGradient id="mlkbg" gradientUnits="userSpaceOnUse" x1="100" y1="0" x2="165" y2="0"><stop offset="0" stop-color="#0b0705" stop-opacity="0"/><stop offset=".55" stop-color="#0b0705" stop-opacity=".75"/><stop offset="1" stop-color="#0a0604" stop-opacity="1"/></linearGradient><filter id="mpb" x="-10%" y="-10%" width="120%" height="120%"><feGaussianBlur stdDeviation="1.15"/></filter></defs>
<rect x="40" y="257" width="162" height="91" fill="#2a1a10"/>
<g filter="url(#mb2)">
<polygon points="38.0,288.0 118.5,285.4 118.5,351.3 38.0,351.3" fill="#4a2c1b"/>
<polygon points="49.8,288.8 52.1,288.8 52.1,351.3 49.8,351.3" fill="#27150c" opacity=".8"/>
<polygon points="62.5,288.8 64.9,288.8 64.9,351.3 62.5,351.3" fill="#27150c" opacity=".8"/>
<polygon points="76.3,288.8 78.6,288.8 78.6,351.3 76.3,351.3" fill="#27150c" opacity=".8"/>
<polygon points="90.0,288.8 92.4,288.8 92.4,351.3 90.0,351.3" fill="#27150c" opacity=".8"/>
<polygon points="54.7,291.3 60.2,291.3 60.2,351.3 54.7,351.3" fill="#5e3823" opacity=".75"/>
<polygon points="68.4,291.3 73.9,291.3 73.9,351.3 68.4,351.3" fill="#5e3823" opacity=".75"/>
<polygon points="82.2,291.3 87.7,291.3 87.7,351.3 82.2,351.3" fill="#5e3823" opacity=".75"/>
<polygon points="38.0,255.0 205.0,255.0 205.0,284.4 38.0,286.8" fill="#20130b"/>
</g>
<rect x="95" y="250" width="115" height="105" fill="url(#mlkbg)"/>
<g filter="url(#mpb)">
<polygon points="69.4,351.3 85.1,342.4 100.9,335.5 114.6,331.2 140.2,331.2 153.9,334.6 165.7,339.5 185.4,351.3" fill="#4e2f17"/>
<polygon points="142.1,331.6 161.8,337.9 182.4,349.3 153.9,349.3" fill="#633c1d"/>
<polygon points="85.1,342.4 100.9,335.5 110.7,333.6 106.8,351.3 75.3,351.3" fill="#3e2512"/>
<polygon points="130.3,312.0 152.0,302.1 152.4,321.8 148.0,339.5 134.3,335.5 128.4,327.7" fill="#2e1e12"/>
<polygon points="107.5,273.4 113.4,266.4 122.5,262.4 133.5,261.6 144.5,264.4 153.5,271.9 158.6,282.5 159.4,294.3 157.1,306.1 153.1,316.9 148.0,322.2 144.5,312.9 141.0,292.3 136.2,278.2 122.5,273.6 110.7,276.6" fill="#aaa598"/>
<polygon points="122.5,263.6 134.7,263.2 148.0,269.9 155.5,282.5 155.5,299.2 151.2,312.0 146.1,307.2 144.5,290.3 138.2,276.2 124.4,270.3" fill="#d2cec2"/>
<polygon points="107.9,273.4 104.8,285.4 107.5,287.6 111.9,277.0" fill="#9a9588"/>
<polygon points="143.7,317.9 148.0,312.0 151.0,317.9 149.0,331.6 143.1,335.5" fill="#8d887a" opacity=".8"/>
<polygon points="109.1,275.0 122.5,272.7 136.2,277.8 141.3,292.3 142.5,310.0 137.2,323.4 124.1,328.1 113.6,319.8 108.3,305.1 104.8,295.3 105.2,286.4" fill="#bd9463"/>
<polygon points="109.9,276.2 122.5,274.2 132.7,278.9 131.5,292.3 124.8,304.5 120.5,317.1 113.0,316.3 109.1,304.5 106.4,294.7 106.4,286.8" fill="#d6b482"/>
<polygon points="110.7,276.6 122.5,274.6 129.9,279.3 128.4,286.8 109.1,286.8" fill="#e0c394" opacity=".8"/>
<polygon points="131.5,292.3 141.0,293.3 142.1,310.0 137.2,322.2 126.4,326.5 124.1,312.0" fill="#9c6e42"/>
</g><g filter="url(#mb1)">
<polygon points="106.8,290.7 118.5,289.6 118.5,293.1 107.1,293.9" fill="#4e321d" opacity=".85"/>
<polygon points="123.7,291.5 136.2,292.3 135.8,295.8 123.7,294.7" fill="#4e321d" opacity=".85"/>
<polygon points="111.7,311.2 122.5,311.6 121.7,313.9 112.3,313.5" fill="#9a4a36" opacity=".8"/>
<polygon points="109.9,295.3 113.8,295.3 113.0,307.2 109.1,306.1" fill="#c9a574" opacity=".9"/>
</g><g filter="url(#mpb)">
<polygon points="115.6,329.3 124.4,327.7 138.2,331.2 143.7,351.3 109.1,351.3 113.0,337.5" fill="#d2cbbb"/>
<polygon points="122.5,332.4 128.4,332.4 129.4,351.3 120.1,351.3" fill="#a0978a" opacity=".75"/>
</g></g>
<g clip-path="url(#mcpR)">
<rect x="270" y="241" width="132" height="110" fill="#7c6c55"/>
<g filter="url(#mb2)">
<polygon points="351.8,238.8 405.5,238.8 405.5,283.5 366.1,281.7" fill="#9c8d74"/>
<polygon points="366.1,281.7 405.5,283.5 405.5,353.2 376.9,353.2" fill="#8a7a62"/>
<polygon points="286.6,238.8 325.0,238.8 310.7,258.5 301.8,290.6 286.6,312.1" fill="#86745a"/>
<polygon points="286.6,247.7 366.1,242.4 405.5,253.1 405.5,256.7 366.1,246.3 286.6,252.0" fill="#a89a80" opacity=".6"/>
<polygon points="267.8,238.8 287.1,238.8 287.1,353.2 267.8,353.2" fill="#3b3a35"/>
<polygon points="275.8,238.8 280.3,238.8 280.3,353.2 275.8,353.2" fill="#55534b"/>
</g><g filter="url(#mpb)">
<polygon points="310.7,257.0 317.0,251.3 325.0,248.4 337.5,250.6 348.2,247.7 356.3,250.9 360.8,256.7 365.4,271.0 367.6,285.3 369.3,297.8 373.3,317.5 380.4,331.8 385.4,344.3 386.7,353.2 279.9,353.2 282.1,340.7 289.2,327.3 296.4,315.7 300.9,304.9 302.7,290.6 304.4,278.1 307.5,265.6" fill="#0b0b0c"/>
<polygon points="314.3,263.8 325.0,256.7 326.8,272.8 319.6,296.0 310.7,308.5 308.9,290.6" fill="#1f1f23" opacity=".9"/>
<polygon points="310.7,312.1 325.0,308.5 328.6,330.0 319.6,344.3 307.1,337.1" fill="#1d1d21" opacity=".8"/>
<polygon points="330.7,272.8 337.5,269.5 346.5,269.9 350.4,272.8 352.5,283.5 352.9,294.2 350.7,304.9 343.2,313.5 336.1,311.7 331.4,304.9 328.6,294.2 329.3,281.7" fill="#d0a070"/>
<polygon points="331.4,274.2 337.5,271.0 345.0,271.3 346.1,283.5 343.2,296.0 341.5,308.9 336.1,309.6 331.8,303.5 329.7,293.9 330.0,282.1" fill="#e8c294"/>
<polygon points="345.7,283.5 352.5,283.8 352.9,294.2 350.7,304.6 344.7,308.9 344.0,296.0" fill="#aa774c" opacity=".85"/>
<polygon points="336.1,314.2 344.7,313.5 350.0,315.7 355.4,326.4 359.3,337.1 356.3,344.3 350.0,333.5 342.9,324.6" fill="#cbc3ac"/>
<polygon points="344.7,326.4 359.0,337.1 365.4,353.2 350.0,353.2" fill="#a39b83"/>
<polygon points="289.2,353.2 298.2,342.5 312.8,331.4 326.8,340.7 344.7,353.2" fill="#25241e"/>
<polygon points="283.2,345.3 294.6,337.1 307.5,327.8 312.8,331.8 298.2,342.8 288.3,353.2 282.1,353.2" fill="#8d6e3c"/>
</g><g filter="url(#mb1)">
<polygon points="330.4,286.0 339.3,285.6 339.3,288.9 330.4,289.2" fill="#4e3220" opacity=".8"/>
<polygon points="343.2,286.0 351.5,286.3 351.1,289.6 343.2,289.2" fill="#4e3220" opacity=".8"/>
<polygon points="336.6,301.4 346.8,301.4 346.1,303.9 337.2,303.9" fill="#9a4c38" opacity=".8"/>
<polygon points="341.1,288.9 344.0,288.9 345.4,297.8 340.7,298.1" fill="#c89868" opacity=".8"/>
</g></g>
<g filter="url(#mtb)"><polygon points="9.5,81.8 11.5,79.4 14,78.4 17,78.9 17.4,85.6 15.4,87.3 13.6,84.8 12,83" fill="#cfcfcf" opacity=".5"/><circle cx="15.2" cy="85.5" r="1.25" fill="#fff" opacity=".95"/><path d="M11,80.4 l3,2.4 M12.6,79.2 l1.8,3.4" stroke="#222" stroke-width=".5" opacity=".7"/></g>
</g>
</svg>
<svg class="thumbsvg" width="102" height="38.8" viewBox="0 0 102 38.8" style="left:16px;top:510px"><defs>
<linearGradient id="t16gB" gradientUnits="userSpaceOnUse" x1="20" y1="0" x2="223" y2="0">
 <stop offset="0" stop-color="#e39a1c" stop-opacity="0"/><stop offset=".3" stop-color="#e49c1e" stop-opacity=".12"/><stop offset=".55" stop-color="#e6a828" stop-opacity=".42"/><stop offset=".75" stop-color="#e8c444" stop-opacity=".8"/><stop offset=".9" stop-color="#ecd868" stop-opacity=".95"/><stop offset="1" stop-color="#e6e080" stop-opacity="1"/>
</linearGradient>
<linearGradient id="t16gG" gradientUnits="userSpaceOnUse" x1="176" y1="19" x2="316" y2="1">
 <stop offset="0" stop-color="#26300c" stop-opacity=".6"/><stop offset=".22" stop-color="#2c6a22"/><stop offset=".42" stop-color="#2f9a3c"/><stop offset=".62" stop-color="#2aa68a"/><stop offset="1" stop-color="#2fc6c4"/>
</linearGradient>
<linearGradient id="t16gC" gradientUnits="userSpaceOnUse" x1="380" y1="0" x2="467" y2="0">
 <stop offset="0" stop-color="#25b9bb"/><stop offset="1" stop-color="#2fdede"/>
</linearGradient>
<linearGradient id="t16gTop" gradientUnits="userSpaceOnUse" x1="0" y1="0" x2="0" y2="12">
 <stop offset="0" stop-color="#d8b534" stop-opacity=".85"/><stop offset="1" stop-color="#e2b030" stop-opacity="0"/>
</linearGradient>
<filter id="t16b1" x="-5%" y="-20%" width="110%" height="140%"><feGaussianBlur stdDeviation=".6"/></filter>
<filter id="t16b2" x="-10%" y="-10%" width="120%" height="120%"><feGaussianBlur stdDeviation="1.6"/></filter>
<filter id="t16b3" x="-10%" y="-10%" width="120%" height="120%"><feGaussianBlur stdDeviation="3"/></filter>
<clipPath id="t16cpS"><path d="M0,0 H223 L204,9.7 L183,15.6 L166,20.8 C155,24.6 146,28.4 135.4,32 C124,36 112,39.6 100.7,42.6 C88,45.6 78,47.4 66,49 L51.5,51 C40,52.6 20,54.8 0,55.6 Z"/></clipPath></defs><rect width="102" height="76" fill="#000"/><g transform="scale(.2184)"><g clip-path="url(#t16cpS)">
<rect x="-5" y="-5" width="240" height="70" fill="#2a0402"/>
<g filter="url(#t16b3)">
<path d="M-8,-8 H223 L223,0.00 L204,9.70 L183,15.60 L166,20.80 L135.4,32.00 L100.7,42.60 L66,49.00 L51.5,51.00 L25,53.80 L0,55.60 L-8,55.60 Z" fill="#4a0804" opacity="1"/>
<path d="M-8,-8 H223 L223,0.00 L204,9.12 L183,14.66 L166,19.55 L135.4,30.08 L100.7,40.04 L66,46.06 L51.5,47.94 L25,50.57 L0,52.26 L-8,52.26 Z" fill="#7a0e06" opacity="1"/>
<path d="M-8,-8 H223 L223,0.00 L204,8.15 L183,13.10 L166,17.47 L135.4,26.88 L100.7,35.78 L66,41.16 L51.5,42.84 L25,45.19 L0,46.70 L-8,46.70 Z" fill="#b0140a" opacity="1"/>
<path d="M-8,-8 H223 L223,0.00 L204,6.79 L183,10.92 L166,14.56 L135.4,22.40 L100.7,29.82 L66,34.30 L51.5,35.70 L25,37.66 L0,38.92 L-8,38.92 Z" fill="#e01b10" opacity="1"/>
<path d="M-8,-8 H223 L223,0.00 L204,5.33 L183,8.58 L166,11.44 L135.4,17.60 L100.7,23.43 L66,26.95 L51.5,28.05 L25,29.59 L0,30.58 L-8,30.58 Z" fill="#df3f12" opacity="1"/>
<path d="M-8,-8 H223 L223,0.00 L204,4.07 L183,6.55 L166,8.74 L135.4,13.44 L100.7,17.89 L66,20.58 L51.5,21.42 L25,22.60 L0,23.35 L-8,23.35 Z" fill="#e06c10" opacity="1"/>
<path d="M-8,-8 H223 L223,0.00 L204,2.72 L183,4.37 L166,5.82 L135.4,8.96 L100.7,11.93 L66,13.72 L51.5,14.28 L25,15.06 L0,15.57 L-8,15.57 Z" fill="#e09614" opacity="1"/>
<path d="M-8,-8 H223 L223,0.00 L204,1.45 L183,2.34 L166,3.12 L135.4,4.80 L100.7,6.39 L66,7.35 L51.5,7.65 L25,8.07 L0,8.34 L-8,8.34 Z" fill="#d2a81e" opacity="1"/>
</g>
<rect x="-5" y="-5" width="240" height="70" fill="url(#t16gB)"/>
<rect x="-5" y="-2" width="240" height="16" fill="url(#t16gTop)"/>
</g>
<g filter="url(#t16b1)">
<path d="M32,16.7 C45,16 55,15.3 66,14.5 C90,12.8 112,11.2 135,9.5 C150,8.3 164,7 176,6 C192,4.4 208,2.6 223,0.3 L240,0 L204,9.7 C198,10 192,10 187,10 C180,10 172,9.8 166,9.9 C156,10.6 146,11.6 135,12.7 C112,14.6 90,15.6 66,16.2 C55,16.5 45,16.8 32,16.8 Z" fill="#070503"/>
<path d="M204,9.7 L223,1.6 L240,0 L316,0 L316,1.2 C290,2.4 262,3.8 250,4.8 C232,6.2 218,8 204,9.7 Z" fill="#0c2e17"/>
<path d="M176,19.3 C200,15 225,11 246,8 C270,5 295,3.4 316,2.5 L316,1 C290,2.2 262,3.6 250,4.6 C232,6 218,7.8 204,9.7 C196,12.6 186,16 176,19.3 Z" fill="url(#t16gG)"/>
<path d="M300,0 L467,0 L467,19.6 C440,10.5 420,5.2 395,2.6 C372,0.9 360,1.2 343,1.4 C330,1.6 316,2.2 300,2.8 Z" fill="url(#t16gC)"/>
<path d="M390,2.2 C420,5 440,10.2 467,19.4 L467,17 C440,8.5 420,3.8 390,1.6 Z" fill="#e9ffff" opacity=".9"/>
<path d="M436,0 L467,11 L467,6.5 L449,0 Z" fill="#118f94" opacity=".8"/>
<path d="M455,0 L467,4 L467,0 Z" fill="#5fe8e8" opacity=".9"/>
<path d="M425,0 L467,14.5 L467,13 L431,0 Z" fill="#bff8f8" opacity=".6"/>
</g></g><filter id="t16tb" x="-2%" y="-2%" width="104%" height="104%"><feGaussianBlur stdDeviation=".16"/></filter><g filter="url(#t16tb)"><text x="11.5" y="10.3" font-size="8.2" fill="#fff" textLength="80.5" lengthAdjust="spacingAndGlyphs">HIGH ENLIGHTENMENT</text><text x="11.5" y="18.5" font-size="8.2" fill="#fff" textLength="41.8" lengthAdjust="spacingAndGlyphs">(1730-1780)</text><text x="15.2" y="25.8" font-size="3" fill="#fff" textLength="61.8" lengthAdjust="spacingAndGlyphs" stroke="#fff" stroke-width=".1">Belief in reason as the basis for knowledge</text><text x="15.2" y="30.3" font-size="3" fill="#fff" textLength="61" lengthAdjust="spacingAndGlyphs" stroke="#fff" stroke-width=".1">Reason is an instrument for social change</text><text x="15.2" y="34.7" font-size="3" fill="#fff" textLength="71.1" lengthAdjust="spacingAndGlyphs" stroke="#fff" stroke-width=".1">Reason used to challenge power of church and</text><text x="15.2" y="38.4" font-size="3" fill="#fff" textLength="14.8" lengthAdjust="spacingAndGlyphs" stroke="#fff" stroke-width=".1">monarchy</text><rect x="12.5" y="24.1" width=".8" height=".8" fill="#eee"/><rect x="12.5" y="28.6" width=".8" height=".8" fill="#eee"/><rect x="12.5" y="33" width=".8" height=".8" fill="#eee"/></g></svg>

<!-- main slide -->
<div id="slide" class="abs">
<svg id="slidesvg" width="467" height="350.3" viewBox="0 0 467 351" preserveAspectRatio="none" style="left:0;top:0">
<defs>
<linearGradient id="gB" gradientUnits="userSpaceOnUse" x1="20" y1="0" x2="223" y2="0">
 <stop offset="0" stop-color="#e39a1c" stop-opacity="0"/><stop offset=".3" stop-color="#e49c1e" stop-opacity=".12"/><stop offset=".55" stop-color="#e6a828" stop-opacity=".42"/><stop offset=".75" stop-color="#e8c444" stop-opacity=".8"/><stop offset=".9" stop-color="#ecd868" stop-opacity=".95"/><stop offset="1" stop-color="#e6e080" stop-opacity="1"/>
</linearGradient>
<linearGradient id="gG" gradientUnits="userSpaceOnUse" x1="176" y1="19" x2="316" y2="1">
 <stop offset="0" stop-color="#26300c" stop-opacity=".6"/><stop offset=".22" stop-color="#2c6a22"/><stop offset=".42" stop-color="#2f9a3c"/><stop offset=".62" stop-color="#2aa68a"/><stop offset="1" stop-color="#2fc6c4"/>
</linearGradient>
<linearGradient id="gC" gradientUnits="userSpaceOnUse" x1="380" y1="0" x2="467" y2="0">
 <stop offset="0" stop-color="#25b9bb"/><stop offset="1" stop-color="#2fdede"/>
</linearGradient>
<linearGradient id="gTop" gradientUnits="userSpaceOnUse" x1="0" y1="0" x2="0" y2="12">
 <stop offset="0" stop-color="#d8b534" stop-opacity=".85"/><stop offset="1" stop-color="#e2b030" stop-opacity="0"/>
</linearGradient>
<filter id="b1" x="-5%" y="-20%" width="110%" height="140%"><feGaussianBlur stdDeviation=".6"/></filter>
<filter id="b2" x="-10%" y="-10%" width="120%" height="120%"><feGaussianBlur stdDeviation="1.6"/></filter>
<filter id="b3" x="-10%" y="-10%" width="120%" height="120%"><feGaussianBlur stdDeviation="3"/></filter>
<clipPath id="cpS"><path d="M0,0 H223 L204,9.7 L183,15.6 L166,20.8 C155,24.6 146,28.4 135.4,32 C124,36 112,39.6 100.7,42.6 C88,45.6 78,47.4 66,49 L51.5,51 C40,52.6 20,54.8 0,55.6 Z"/></clipPath>
<filter id="tb" x="-2%" y="-10%" width="104%" height="120%"><feGaussianBlur stdDeviation=".28"/></filter>
<clipPath id="cpL"><rect x="40" y="257" width="162" height="91"/></clipPath>
<clipPath id="cpR"><rect x="270" y="241" width="132" height="110"/></clipPath>
</defs>
<rect width="467" height="351" fill="#000"/>
<g clip-path="url(#cpS)">
<rect x="-5" y="-5" width="240" height="70" fill="#2a0402"/>
<g filter="url(#b3)">
<path d="M-8,-8 H223 L223,0.00 L204,9.70 L183,15.60 L166,20.80 L135.4,32.00 L100.7,42.60 L66,49.00 L51.5,51.00 L25,53.80 L0,55.60 L-8,55.60 Z" fill="#4a0804" opacity="1"/>
<path d="M-8,-8 H223 L223,0.00 L204,9.12 L183,14.66 L166,19.55 L135.4,30.08 L100.7,40.04 L66,46.06 L51.5,47.94 L25,50.57 L0,52.26 L-8,52.26 Z" fill="#7a0e06" opacity="1"/>
<path d="M-8,-8 H223 L223,0.00 L204,8.15 L183,13.10 L166,17.47 L135.4,26.88 L100.7,35.78 L66,41.16 L51.5,42.84 L25,45.19 L0,46.70 L-8,46.70 Z" fill="#b0140a" opacity="1"/>
<path d="M-8,-8 H223 L223,0.00 L204,6.79 L183,10.92 L166,14.56 L135.4,22.40 L100.7,29.82 L66,34.30 L51.5,35.70 L25,37.66 L0,38.92 L-8,38.92 Z" fill="#e01b10" opacity="1"/>
<path d="M-8,-8 H223 L223,0.00 L204,5.33 L183,8.58 L166,11.44 L135.4,17.60 L100.7,23.43 L66,26.95 L51.5,28.05 L25,29.59 L0,30.58 L-8,30.58 Z" fill="#df3f12" opacity="1"/>
<path d="M-8,-8 H223 L223,0.00 L204,4.07 L183,6.55 L166,8.74 L135.4,13.44 L100.7,17.89 L66,20.58 L51.5,21.42 L25,22.60 L0,23.35 L-8,23.35 Z" fill="#e06c10" opacity="1"/>
<path d="M-8,-8 H223 L223,0.00 L204,2.72 L183,4.37 L166,5.82 L135.4,8.96 L100.7,11.93 L66,13.72 L51.5,14.28 L25,15.06 L0,15.57 L-8,15.57 Z" fill="#e09614" opacity="1"/>
<path d="M-8,-8 H223 L223,0.00 L204,1.45 L183,2.34 L166,3.12 L135.4,4.80 L100.7,6.39 L66,7.35 L51.5,7.65 L25,8.07 L0,8.34 L-8,8.34 Z" fill="#d2a81e" opacity="1"/>
</g>
<rect x="-5" y="-5" width="240" height="70" fill="url(#gB)"/>
<rect x="-5" y="-2" width="240" height="16" fill="url(#gTop)"/>
</g>
<g filter="url(#b1)">
<path d="M32,16.7 C45,16 55,15.3 66,14.5 C90,12.8 112,11.2 135,9.5 C150,8.3 164,7 176,6 C192,4.4 208,2.6 223,0.3 L240,0 L204,9.7 C198,10 192,10 187,10 C180,10 172,9.8 166,9.9 C156,10.6 146,11.6 135,12.7 C112,14.6 90,15.6 66,16.2 C55,16.5 45,16.8 32,16.8 Z" fill="#070503"/>
<path d="M204,9.7 L223,1.6 L240,0 L316,0 L316,1.2 C290,2.4 262,3.8 250,4.8 C232,6.2 218,8 204,9.7 Z" fill="#0c2e17"/>
<path d="M176,19.3 C200,15 225,11 246,8 C270,5 295,3.4 316,2.5 L316,1 C290,2.2 262,3.6 250,4.6 C232,6 218,7.8 204,9.7 C196,12.6 186,16 176,19.3 Z" fill="url(#gG)"/>
<path d="M300,0 L467,0 L467,19.6 C440,10.5 420,5.2 395,2.6 C372,0.9 360,1.2 343,1.4 C330,1.6 316,2.2 300,2.8 Z" fill="url(#gC)"/>
<path d="M390,2.2 C420,5 440,10.2 467,19.4 L467,17 C440,8.5 420,3.8 390,1.6 Z" fill="#e9ffff" opacity=".9"/>
<path d="M436,0 L467,11 L467,6.5 L449,0 Z" fill="#118f94" opacity=".8"/>
<path d="M455,0 L467,4 L467,0 Z" fill="#5fe8e8" opacity=".9"/>
<path d="M425,0 L467,14.5 L467,13 L431,0 Z" fill="#bff8f8" opacity=".6"/>
</g>
<g transform="translate(0,-.7)"><g filter="url(#tb)">
<text x="37" y="37.6" font-size="23.3" fill="#fff" textLength="394" lengthAdjust="spacingAndGlyphs">EARLY ENLIGHTENMENT (1685-1730)</text>
<text x="15" y="70" font-size="13.2" fill="#fff" textLength="158" lengthAdjust="spacingAndGlyphs">John Locke (1632-1704)</text>
<text x="15" y="88.6" font-size="13.2" fill="#fff" textLength="196" lengthAdjust="spacingAndGlyphs" font-style="italic">Two Treatises of Government</text>
<text x="15" y="100.5" font-size="13.2" fill="#fff" textLength="195.5" lengthAdjust="spacingAndGlyphs">(1689):  separation of church</text>
<text x="15" y="112.3" font-size="13.2" fill="#fff" textLength="157" lengthAdjust="spacingAndGlyphs">and state, tolerance of</text>
<text x="15" y="124.2" font-size="13.2" fill="#fff" textLength="173" lengthAdjust="spacingAndGlyphs">different forms of religious</text>
<text x="15" y="136" font-size="13.2" fill="#fff" textLength="128" lengthAdjust="spacingAndGlyphs">expression, and for</text>
<text x="15" y="147.8" font-size="13.2" fill="#fff" textLength="199" lengthAdjust="spacingAndGlyphs">government to recognise the</text>
<text x="15" y="159.6" font-size="13.2" fill="#fff" textLength="157" lengthAdjust="spacingAndGlyphs">innate rights of people.</text>
<text x="15" y="178" font-size="13.2" fill="#fff" textLength="110" lengthAdjust="spacingAndGlyphs" font-style="italic">Essay on Human</text>
<text x="15" y="189.8" font-size="13.2" fill="#fff" textLength="186" lengthAdjust="spacingAndGlyphs"><tspan font-style="italic">Understanding</tspan> (1690), John</text>
<text x="15" y="201.6" font-size="13.2" fill="#fff" textLength="208" lengthAdjust="spacingAndGlyphs">Locke argued that knowledge</text>
<text x="15" y="213.5" font-size="13.2" fill="#fff" textLength="133" lengthAdjust="spacingAndGlyphs">is acquired through</text>
<text x="15" y="225.3" font-size="13.2" fill="#fff" textLength="80" lengthAdjust="spacingAndGlyphs">experience.</text>
<text x="238" y="62.4" font-size="13.2" fill="#fff" textLength="212" lengthAdjust="spacingAndGlyphs">Gottfried Wilhelm Leibniz (1646-</text>
<text x="238" y="74" font-size="13.2" fill="#fff" textLength="34.6" lengthAdjust="spacingAndGlyphs">1716)</text>
<text x="238" y="92.3" font-size="13.2" fill="#fff" textLength="201" lengthAdjust="spacingAndGlyphs">Reason can provide the basis</text>
<text x="238" y="104" font-size="13.2" fill="#fff" textLength="193.3" lengthAdjust="spacingAndGlyphs">on which all knowledge can</text>
<text x="238" y="115.7" font-size="13.2" fill="#fff" textLength="72" lengthAdjust="spacingAndGlyphs">be unified.</text>
<text x="238" y="134.5" font-size="13.2" fill="#fff" textLength="190.6" lengthAdjust="spacingAndGlyphs">Optimism: the world, having</text>
<text x="238" y="146.2" font-size="13.2" fill="#fff" textLength="129" lengthAdjust="spacingAndGlyphs">been made by the</text>
<text x="238" y="158" font-size="13.2" fill="#fff" textLength="199.7" lengthAdjust="spacingAndGlyphs">omnipotent, omnibenevolent</text>
<text x="238" y="169.8" font-size="13.2" fill="#fff" textLength="205" lengthAdjust="spacingAndGlyphs">God, is the best possible world</text>
<text x="238" y="181.6" font-size="13.2" fill="#fff" textLength="200" lengthAdjust="spacingAndGlyphs">that could have been made,</text>
<text x="238" y="193.4" font-size="13.2" fill="#fff" textLength="166.6" lengthAdjust="spacingAndGlyphs">and that everything that</text>
<text x="238" y="205.2" font-size="13.2" fill="#fff" textLength="204" lengthAdjust="spacingAndGlyphs">happens in the world is for the</text>
<text x="238" y="217" font-size="13.2" fill="#fff" textLength="100" lengthAdjust="spacingAndGlyphs">best outcome.</text>
<rect x="35.2" y="240.6" width="1.5" height="1.5" fill="#ddd"/>
<text x="46.5" y="244.6" font-size="6.6" fill="#d8482a" textLength="173" lengthAdjust="spacingAndGlyphs" text-decoration="underline">https://www.history.com/topics/british-history/john-</text>
<text x="46.5" y="252" font-size="6.6" fill="#d8482a" textLength="17.5" lengthAdjust="spacingAndGlyphs" text-decoration="underline">locke</text>
<text x="237.5" y="231.6" font-size="6.6" fill="#d8482a" textLength="193.5" lengthAdjust="spacingAndGlyphs" text-decoration="underline">https://www.thefamouspeople.com/profiles/gottfried-w-</text>
<text x="237.5" y="237.2" font-size="6.6" fill="#d8482a" textLength="51" lengthAdjust="spacingAndGlyphs" text-decoration="underline">leibniz-535.php</text>
</g>
<g clip-path="url(#cpL)">
<defs><linearGradient id="lkbg" gradientUnits="userSpaceOnUse" x1="100" y1="0" x2="165" y2="0"><stop offset="0" stop-color="#0b0705" stop-opacity="0"/><stop offset=".55" stop-color="#0b0705" stop-opacity=".75"/><stop offset="1" stop-color="#0a0604" stop-opacity="1"/></linearGradient><filter id="pb" x="-10%" y="-10%" width="120%" height="120%"><feGaussianBlur stdDeviation="1.15"/></filter></defs>
<rect x="40" y="257" width="162" height="91" fill="#2a1a10"/>
<g filter="url(#b2)">
<polygon points="38.0,288.0 118.5,285.4 118.5,351.3 38.0,351.3" fill="#4a2c1b"/>
<polygon points="49.8,288.8 52.1,288.8 52.1,351.3 49.8,351.3" fill="#27150c" opacity=".8"/>
<polygon points="62.5,288.8 64.9,288.8 64.9,351.3 62.5,351.3" fill="#27150c" opacity=".8"/>
<polygon points="76.3,288.8 78.6,288.8 78.6,351.3 76.3,351.3" fill="#27150c" opacity=".8"/>
<polygon points="90.0,288.8 92.4,288.8 92.4,351.3 90.0,351.3" fill="#27150c" opacity=".8"/>
<polygon points="54.7,291.3 60.2,291.3 60.2,351.3 54.7,351.3" fill="#5e3823" opacity=".75"/>
<polygon points="68.4,291.3 73.9,291.3 73.9,351.3 68.4,351.3" fill="#5e3823" opacity=".75"/>
<polygon points="82.2,291.3 87.7,291.3 87.7,351.3 82.2,351.3" fill="#5e3823" opacity=".75"/>
<polygon points="38.0,255.0 205.0,255.0 205.0,284.4 38.0,286.8" fill="#20130b"/>
</g>
<rect x="95" y="250" width="115" height="105" fill="url(#lkbg)"/>
<g filter="url(#pb)">
<polygon points="69.4,351.3 85.1,342.4 100.9,335.5 114.6,331.2 140.2,331.2 153.9,334.6 165.7,339.5 185.4,351.3" fill="#4e2f17"/>
<polygon points="142.1,331.6 161.8,337.9 182.4,349.3 153.9,349.3" fill="#633c1d"/>
<polygon points="85.1,342.4 100.9,335.5 110.7,333.6 106.8,351.3 75.3,351.3" fill="#3e2512"/>
<polygon points="130.3,312.0 152.0,302.1 152.4,321.8 148.0,339.5 134.3,335.5 128.4,327.7" fill="#2e1e12"/>
<polygon points="107.5,273.4 113.4,266.4 122.5,262.4 133.5,261.6 144.5,264.4 153.5,271.9 158.6,282.5 159.4,294.3 157.1,306.1 153.1,316.9 148.0,322.2 144.5,312.9 141.0,292.3 136.2,278.2 122.5,273.6 110.7,276.6" fill="#aaa598"/>
<polygon points="122.5,263.6 134.7,263.2 148.0,269.9 155.5,282.5 155.5,299.2 151.2,312.0 146.1,307.2 144.5,290.3 138.2,276.2 124.4,270.3" fill="#d2cec2"/>
<polygon points="107.9,273.4 104.8,285.4 107.5,287.6 111.9,277.0" fill="#9a9588"/>
<polygon points="143.7,317.9 148.0,312.0 151.0,317.9 149.0,331.6 143.1,335.5" fill="#8d887a" opacity=".8"/>
<polygon points="109.1,275.0 122.5,272.7 136.2,277.8 141.3,292.3 142.5,310.0 137.2,323.4 124.1,328.1 113.6,319.8 108.3,305.1 104.8,295.3 105.2,286.4" fill="#bd9463"/>
<polygon points="109.9,276.2 122.5,274.2 132.7,278.9 131.5,292.3 124.8,304.5 120.5,317.1 113.0,316.3 109.1,304.5 106.4,294.7 106.4,286.8" fill="#d6b482"/>
<polygon points="110.7,276.6 122.5,274.6 129.9,279.3 128.4,286.8 109.1,286.8" fill="#e0c394" opacity=".8"/>
<polygon points="131.5,292.3 141.0,293.3 142.1,310.0 137.2,322.2 126.4,326.5 124.1,312.0" fill="#9c6e42"/>
</g><g filter="url(#b1)">
<polygon points="106.8,290.7 118.5,289.6 118.5,293.1 107.1,293.9" fill="#4e321d" opacity=".85"/>
<polygon points="123.7,291.5 136.2,292.3 135.8,295.8 123.7,294.7" fill="#4e321d" opacity=".85"/>
<polygon points="111.7,311.2 122.5,311.6 121.7,313.9 112.3,313.5" fill="#9a4a36" opacity=".8"/>
<polygon points="109.9,295.3 113.8,295.3 113.0,307.2 109.1,306.1" fill="#c9a574" opacity=".9"/>
</g><g filter="url(#pb)">
<polygon points="115.6,329.3 124.4,327.7 138.2,331.2 143.7,351.3 109.1,351.3 113.0,337.5" fill="#d2cbbb"/>
<polygon points="122.5,332.4 128.4,332.4 129.4,351.3 120.1,351.3" fill="#a0978a" opacity=".75"/>
</g></g>
<g clip-path="url(#cpR)">
<rect x="270" y="241" width="132" height="110" fill="#7c6c55"/>
<g filter="url(#b2)">
<polygon points="351.8,238.8 405.5,238.8 405.5,283.5 366.1,281.7" fill="#9c8d74"/>
<polygon points="366.1,281.7 405.5,283.5 405.5,353.2 376.9,353.2" fill="#8a7a62"/>
<polygon points="286.6,238.8 325.0,238.8 310.7,258.5 301.8,290.6 286.6,312.1" fill="#86745a"/>
<polygon points="286.6,247.7 366.1,242.4 405.5,253.1 405.5,256.7 366.1,246.3 286.6,252.0" fill="#a89a80" opacity=".6"/>
<polygon points="267.8,238.8 287.1,238.8 287.1,353.2 267.8,353.2" fill="#3b3a35"/>
<polygon points="275.8,238.8 280.3,238.8 280.3,353.2 275.8,353.2" fill="#55534b"/>
</g><g filter="url(#pb)">
<polygon points="310.7,257.0 317.0,251.3 325.0,248.4 337.5,250.6 348.2,247.7 356.3,250.9 360.8,256.7 365.4,271.0 367.6,285.3 369.3,297.8 373.3,317.5 380.4,331.8 385.4,344.3 386.7,353.2 279.9,353.2 282.1,340.7 289.2,327.3 296.4,315.7 300.9,304.9 302.7,290.6 304.4,278.1 307.5,265.6" fill="#0b0b0c"/>
<polygon points="314.3,263.8 325.0,256.7 326.8,272.8 319.6,296.0 310.7,308.5 308.9,290.6" fill="#1f1f23" opacity=".9"/>
<polygon points="310.7,312.1 325.0,308.5 328.6,330.0 319.6,344.3 307.1,337.1" fill="#1d1d21" opacity=".8"/>
<polygon points="330.7,272.8 337.5,269.5 346.5,269.9 350.4,272.8 352.5,283.5 352.9,294.2 350.7,304.9 343.2,313.5 336.1,311.7 331.4,304.9 328.6,294.2 329.3,281.7" fill="#d0a070"/>
<polygon points="331.4,274.2 337.5,271.0 345.0,271.3 346.1,283.5 343.2,296.0 341.5,308.9 336.1,309.6 331.8,303.5 329.7,293.9 330.0,282.1" fill="#e8c294"/>
<polygon points="345.7,283.5 352.5,283.8 352.9,294.2 350.7,304.6 344.7,308.9 344.0,296.0" fill="#aa774c" opacity=".85"/>
<polygon points="336.1,314.2 344.7,313.5 350.0,315.7 355.4,326.4 359.3,337.1 356.3,344.3 350.0,333.5 342.9,324.6" fill="#cbc3ac"/>
<polygon points="344.7,326.4 359.0,337.1 365.4,353.2 350.0,353.2" fill="#a39b83"/>
<polygon points="289.2,353.2 298.2,342.5 312.8,331.4 326.8,340.7 344.7,353.2" fill="#25241e"/>
<polygon points="283.2,345.3 294.6,337.1 307.5,327.8 312.8,331.8 298.2,342.8 288.3,353.2 282.1,353.2" fill="#8d6e3c"/>
</g><g filter="url(#b1)">
<polygon points="330.4,286.0 339.3,285.6 339.3,288.9 330.4,289.2" fill="#4e3220" opacity=".8"/>
<polygon points="343.2,286.0 351.5,286.3 351.1,289.6 343.2,289.2" fill="#4e3220" opacity=".8"/>
<polygon points="336.6,301.4 346.8,301.4 346.1,303.9 337.2,303.9" fill="#9a4c38" opacity=".8"/>
<polygon points="341.1,288.9 344.0,288.9 345.4,297.8 340.7,298.1" fill="#c89868" opacity=".8"/>
</g></g>
<g filter="url(#tb)"><polygon points="9.5,81.8 11.5,79.4 14,78.4 17,78.9 17.4,85.6 15.4,87.3 13.6,84.8 12,83" fill="#cfcfcf" opacity=".5"/><circle cx="15.2" cy="85.5" r="1.25" fill="#fff" opacity=".95"/><path d="M11,80.4 l3,2.4 M12.6,79.2 l1.8,3.4" stroke="#222" stroke-width=".5" opacity=".7"/></g>
</g>
</svg>
</div>

<!-- window chrome text + icons -->
<svg id="chrome" width="865" height="649" viewBox="0 0 865 649" style="left:0;top:0">
<defs><filter id="sb" x="-1%" y="-1%" width="102%" height="102%"><feGaussianBlur stdDeviation=".22"/></filter></defs>
<g id="titlebar" filter="url(#sb)">
<path d="M10.6,94.6 h5 l1,1 v5 h-6 z M12,94.8 v2 h3 v-2 M12,100.4 v-2.2 h3.4 v2.2" fill="none" stroke="#fff" stroke-width=".75"/>
<path d="M24,96.2 h3.4 a2.2,2.2 0 0 1 0,4.4 h-1.2" fill="none" stroke="#fff" stroke-width=".9"/><path d="M23.2,96.2 l2.4,-2 v4 z" fill="#fff"/>
<path d="M32.9,97.45 L35.1,97.45 L34,98.75 Z" fill="#f3cdbf"/>
<path d="M45.9,95.6 a2.7,2.7 0 1 0 0.9,2.6" fill="none" stroke="#fff" stroke-width=".9"/><path d="M46.9,93.6 v3 h-3 z" fill="#fff"/>
<path d="M54.2,94.6 h6.4 M54.9,94.8 v4 h5 v-4 M57.4,98.8 v1.6 M55.8,101.4 l1.6,-1.2 l1.6,1.2" fill="none" stroke="#fff" stroke-width=".7"/><path d="M56.7,95.7 l2,1.1 l-2,1.1 z" fill="#fff"/>
<path d="M68.6,97.2 h2 M68.6,98.6 l1,1 l1,-1" stroke="#f3cdbf" stroke-width=".6" fill="none"/>
<text x="368" y="99.4" font-size="5.4" fill="#fdf3ef" textLength="129" lengthAdjust="spacingAndGlyphs">China and the European Enlightenment  -  PowerPoint</text>
<text x="733.2" y="99.4" font-size="5.4" fill="#fdf3ef" textLength="27.4" lengthAdjust="spacingAndGlyphs">Elliott Shaw</text>
<rect x="766" y="92.6" width="10" height="9.6" fill="#e9e4e2"/><circle cx="771" cy="96" r="1.9" fill="#fff"/><path d="M767.2,102.2 c0,-4 7.6,-4 7.6,0 z" fill="#fff"/>
<rect x="788.8" y="94.6" width="6.2" height="4.8" fill="none" stroke="#f1c9bb" stroke-width=".6"/><path d="M791.9,95.6 v2.6 M790.8,96.6 l1.1,-1.1 l1.1,1.1" stroke="#f1c9bb" stroke-width=".5" fill="none"/>
<path d="M810.4,97 h5" stroke="#eebfae" stroke-width=".7"/>
<path d="M831,95.6 h4 v4 h-4 z M832.2,95.6 v-1.2 h4 v4 h-1.2" fill="none" stroke="#f1c9bb" stroke-width=".6"/>
<path d="M851.8,94.6 l4.8,4.8 M856.6,94.6 l-4.8,4.8" stroke="#fff" stroke-width=".8"/>
</g>
<g id="tabs" filter="url(#sb)">
<text x="9.2" y="114.2" font-size="5.6" fill="#fdf3ef" textLength="8.1" lengthAdjust="spacingAndGlyphs">File</text>
<text x="60" y="114.2" font-size="5.6" fill="#fdf3ef" textLength="13.3" lengthAdjust="spacingAndGlyphs">Insert</text>
<text x="85.2" y="114.2" font-size="5.6" fill="#fdf3ef" textLength="16.1" lengthAdjust="spacingAndGlyphs">Design</text>
<text x="113.7" y="114.2" font-size="5.6" fill="#fdf3ef" textLength="25.3" lengthAdjust="spacingAndGlyphs">Transitions</text>
<text x="151" y="114.2" font-size="5.6" fill="#fdf3ef" textLength="27.6" lengthAdjust="spacingAndGlyphs">Animations</text>
<text x="190.3" y="114.2" font-size="5.6" fill="#fdf3ef" textLength="26.2" lengthAdjust="spacingAndGlyphs">Slide Show</text>
<text x="228.5" y="114.2" font-size="5.6" fill="#fdf3ef" textLength="16.8" lengthAdjust="spacingAndGlyphs">Review</text>
<text x="257" y="114.2" font-size="5.6" fill="#fdf3ef" textLength="11.7" lengthAdjust="spacingAndGlyphs">View</text>
<text x="280.7" y="114.2" font-size="5.6" fill="#fdf3ef" textLength="24.3" lengthAdjust="spacingAndGlyphs">Recording</text>
<text x="317" y="114.2" font-size="5.6" fill="#fdf3ef" textLength="11" lengthAdjust="spacingAndGlyphs">Help</text>
<text x="340.7" y="114.2" font-size="5.6" fill="#fdf3ef" textLength="22.1" lengthAdjust="spacingAndGlyphs">Foxit PDF</text>
<text x="33" y="114.2" font-size="5.6" fill="#b7472a" textLength="14.8" lengthAdjust="spacingAndGlyphs">Home</text>
<path d="M377.6,111.2 a1.9,1.9 0 1 1 3.6,0 c-.4,.8 -.8,1 -.8,2 h-2 c0,-1 -.4,-1.2 -.8,-2 z M378.6,114.2 h1.6" fill="none" stroke="#fff" stroke-width=".6"/>
<text x="388.3" y="114.2" font-size="5.6" fill="#fdf3ef" textLength="67.2" lengthAdjust="spacingAndGlyphs">Tell me what you want to do</text>
<circle cx="834.6" cy="110.4" r="1.5" fill="none" stroke="#fff" stroke-width=".6"/><path d="M831.8,115 c0,-3.6 5.4,-3.6 5.6,-.6 M836.4,113.2 l1.6,1.6" fill="none" stroke="#fff" stroke-width=".6"/>
<text x="840.8" y="114.2" font-size="5.6" fill="#fdf3ef" textLength="13.1" lengthAdjust="spacingAndGlyphs">Share</text>
</g>
<g id="ribbon-groups" filter="url(#sb)">
<rect x="74.3" y="121.5" width=".6" height="37" fill="#d6d6d6"/>
<rect x="136.6" y="121.5" width=".6" height="37" fill="#d6d6d6"/>
<rect x="251.7" y="121.5" width=".6" height="37" fill="#d6d6d6"/>
<rect x="403.6" y="121.5" width=".6" height="37" fill="#d6d6d6"/>
<rect x="566.7" y="121.5" width=".6" height="37" fill="#d6d6d6"/>
<rect x="612.5" y="121.5" width=".6" height="37" fill="#d6d6d6"/>
<rect x="9.6" y="125" width="6.6" height="9" rx=".6" fill="#ececec" stroke="#c9c9c9" stroke-width=".6"/><rect x="11.4" y="123.8" width="3" height="2" fill="#d2d2d2"/><path d="M13.8,128 h5 l1.8,1.8 v6 h-6.8 z" fill="#f7f7f7" stroke="#c6c6c6" stroke-width=".6"/>
<text x="7.6" y="143" font-size="5.4" fill="#a9a9a9" textLength="11.4" lengthAdjust="spacingAndGlyphs">Paste</text>
<path d="M12.3,148.85 L14.5,148.85 L13.4,150.15 Z" fill="#bdbdbd"/>
<path d="M26,123.4 l3,4.4 M29.6,123.4 l-3,4.4" stroke="#b5b5b5" stroke-width=".6"/><circle cx="26.2" cy="128.4" r=".9" fill="none" stroke="#b5b5b5" stroke-width=".5"/><circle cx="29.4" cy="128.4" r=".9" fill="none" stroke="#b5b5b5" stroke-width=".5"/>
<text x="33" y="127.6" font-size="5.4" fill="#a9a9a9" textLength="8.2" lengthAdjust="spacingAndGlyphs">Cut</text>
<rect x="25.4" y="133.6" width="3" height="4" fill="none" stroke="#b5b5b5" stroke-width=".5"/><rect x="27" y="135" width="3" height="4" fill="#f1f1f1" stroke="#b5b5b5" stroke-width=".5"/>
<text x="33" y="138.3" font-size="5.4" fill="#a9a9a9" textLength="12" lengthAdjust="spacingAndGlyphs">Copy</text>
<path d="M50,136.1 L52,136.1 L51,137.3 Z" fill="#c0c0c0"/>
<path d="M25.6,148.6 l2.4,-2.4 l1.2,1.2 l-2.4,2.4 z M28.4,145.8 l1.4,-1.4" fill="none" stroke="#b5b5b5" stroke-width=".6"/>
<text x="33" y="148.5" font-size="5.4" fill="#a9a9a9" textLength="34.4" lengthAdjust="spacingAndGlyphs">Format Painter</text>
<text x="22" y="158.6" font-size="5.4" fill="#3a3a3a" textLength="22.5" lengthAdjust="spacingAndGlyphs">Clipboard</text>
<path d="M69.1,155.7 h-1 v3.6 h3.6 v-1" fill="none" stroke="#8a8a8a" stroke-width=".5"/><path d="M70.1,156.7 l2,2 m0,-1.5 v1.5 h-1.5" fill="none" stroke="#8a8a8a" stroke-width=".5"/>
<rect x="81.2" y="124" width="12" height="9.6" fill="#fdfdfd" stroke="#8c8c8c" stroke-width=".6"/><path d="M83.2,127 h8 M83.2,129 h8 M83.2,131 h5" stroke="#b9b9b9" stroke-width=".5"/><path d="M81.4,122.4 v3 M79.9,123.9 h3" stroke="#e7a33a" stroke-width=".7"/>
<text x="82.2" y="143" font-size="5.4" fill="#2a2a2a" textLength="10.7" lengthAdjust="spacingAndGlyphs">New</text>
<text x="79.6" y="150" font-size="5.4" fill="#2a2a2a" textLength="11.6" lengthAdjust="spacingAndGlyphs">Slide</text>
<path d="M92.6,147.9 L94.6,147.9 L93.6,149.1 Z" fill="#666"/>
<rect x="99.4" y="123" width="5.4" height="4.6" fill="#fff" stroke="#6d6d6d" stroke-width=".5"/><rect x="100.4" y="124" width="2" height="1.2" fill="#9bb6d6"/>
<text x="106.9" y="127.6" font-size="5.4" fill="#2a2a2a" textLength="17.1" lengthAdjust="spacingAndGlyphs">Layout</text>
<path d="M125.8,125.5 L127.8,125.5 L126.8,126.7 Z" fill="#666"/>
<rect x="100" y="134.4" width="4.8" height="4" fill="#fff" stroke="#6d6d6d" stroke-width=".5"/><path d="M99.2,135.4 a2,2 0 0 1 2.6,-1.6" fill="none" stroke="#3b78c4" stroke-width=".6"/>
<text x="106.9" y="138.3" font-size="5.4" fill="#2a2a2a" textLength="12.7" lengthAdjust="spacingAndGlyphs">Reset</text>
<rect x="100.6" y="145.4" width="4.2" height="3.6" fill="#fff" stroke="#6d6d6d" stroke-width=".5"/><path d="M99.2,144.2 h4" stroke="#d9882a" stroke-width=".7"/>
<text x="106.9" y="148.5" font-size="5.4" fill="#2a2a2a" textLength="17.8" lengthAdjust="spacingAndGlyphs">Section</text>
<path d="M126.6,146.5 L128.6,146.5 L127.6,147.7 Z" fill="#666"/>
<text x="98.7" y="158.6" font-size="5.4" fill="#3a3a3a" textLength="13.3" lengthAdjust="spacingAndGlyphs">Slides</text>
<rect x="140" y="124.4" width="50.6" height="10.2" fill="#e4e4e4" stroke="#d3d3d3" stroke-width=".5"/>
<rect x="191.3" y="124.4" width="20.4" height="10.2" fill="#e4e4e4" stroke="#d3d3d3" stroke-width=".5"/>
<path d="M185.8,129.3 L187.8,129.3 L186.8,130.5 Z" fill="#b9b9b9"/>
<path d="M207.8,129.3 L209.8,129.3 L208.8,130.5 Z" fill="#b9b9b9"/>
<text x="193.4" y="131.4" font-size="5.2" fill="#bdbdbd" textLength="9.4" lengthAdjust="spacingAndGlyphs">16.1</text>
<text x="216" y="131.6" font-size="6.4" fill="#a9a9a9">A</text>
<path d="M221,125.6 l1,-1.2 l1,1.2" fill="none" stroke="#b5b5b5" stroke-width=".5"/>
<text x="227.4" y="131.6" font-size="5.4" fill="#a9a9a9">A</text>
<path d="M231.4,124.6 l1,1.2 l1,-1.2" fill="none" stroke="#b5b5b5" stroke-width=".5"/>
<text x="240" y="131.4" font-size="5.4" fill="#a9a9a9">A</text>
<path d="M242.4,131.4 l3,-4 l1.2,1 l-3,4 z" fill="#c4c4c4"/>
<text x="142.8" y="145.6" font-size="5.6" fill="#9d9d9d" font-weight="700">B</text>
<text x="154.4" y="145.6" font-size="5.6" fill="#9d9d9d" font-style="italic" font-family="Liberation Serif">I</text>
<text x="164.2" y="145.6" font-size="5.6" fill="#9d9d9d" text-decoration="underline">U</text>
<text x="175.6" y="145.6" font-size="5.6" fill="#9d9d9d">S</text>
<text x="185" y="145.4" font-size="4.8" fill="#a6a6a6" textLength="7.4" lengthAdjust="spacingAndGlyphs" text-decoration="line-through">abc</text>
<text x="195.4" y="145.4" font-size="5" fill="#a6a6a6" textLength="6.2" lengthAdjust="spacingAndGlyphs">AV</text>
<path d="M203.5,143.55 L205.3,143.55 L204.4,144.65 Z" fill="#c0c0c0"/>
<text x="212.2" y="145.4" font-size="5.4" fill="#a6a6a6" textLength="7" lengthAdjust="spacingAndGlyphs">Aa</text>
<path d="M221.5,143.55 L223.3,143.55 L222.4,144.65 Z" fill="#c0c0c0"/>
<text x="234.4" y="145.6" font-size="6" fill="#9d9d9d">A</text>
<path d="M242.5,143.55 L244.3,143.55 L243.4,144.65 Z" fill="#c0c0c0"/>
<rect x="229.6" y="138.6" width=".5" height="9" fill="#dcdcdc"/>
<text x="185" y="158.6" font-size="5.4" fill="#3a3a3a" textLength="9.7" lengthAdjust="spacingAndGlyphs">Font</text>
<path d="M246.2,155.7 h-1 v3.6 h3.6 v-1" fill="none" stroke="#8a8a8a" stroke-width=".5"/><path d="M247.2,156.7 l2,2 m0,-1.5 v1.5 h-1.5" fill="none" stroke="#8a8a8a" stroke-width=".5"/>
<path d="M258.6,127.6 h5 M258.6,129.5 h5 M258.6,131.4 h5 " stroke="#bcbcbc" stroke-width=".6" fill="none"/>
<path d="M256.6,127.6 h.8 M256.6,129.5 h.8 M256.6,131.4 h.8" stroke="#bcbcbc" stroke-width=".8"/>
<path d="M266.9,129.35 L268.7,129.35 L267.8,130.45 Z" fill="#c4c4c4"/>
<path d="M276.4,127.6 h5 M276.4,129.5 h5 M276.4,131.4 h5 " stroke="#bcbcbc" stroke-width=".6" fill="none"/>
<path d="M274.4,127.6 h.8 M274.4,129.5 h.8 M274.4,131.4 h.8" stroke="#bcbcbc" stroke-width=".8"/>
<path d="M284.7,129.35 L286.5,129.35 L285.6,130.45 Z" fill="#c4c4c4"/>
<path d="M296,127.2 h5.6 M296,128.8 h5.6 M296,130.4 h5.6 M296,132 h5.6 " stroke="#bcbcbc" stroke-width=".6" fill="none"/>
<path d="M294.4,129.6 l1.6,1 l-1.6,1 z" fill="#bdbdbd"/>
<path d="M306.6,127.2 h5.6 M306.6,128.8 h5.6 M306.6,130.4 h5.6 M306.6,132 h5.6 " stroke="#bcbcbc" stroke-width=".6" fill="none"/>
<path d="M306.4,129.6 l-1.6,1 l1.6,1 z" fill="#bdbdbd"/>
<rect x="315.8" y="124.6" width=".5" height="9.6" fill="#dcdcdc"/>
<path d="M322.4,127.2 h4.4 M322.4,128.8 h4.4 M322.4,130.4 h4.4 M322.4,132 h4.4 " stroke="#bcbcbc" stroke-width=".6" fill="none"/>
<path d="M319.6,127 v6 M318.6,128 l1,-1 l1,1 M318.6,132 l1,1 l1,-1" fill="none" stroke="#bcbcbc" stroke-width=".5"/>
<path d="M329.5,129.35 L331.3,129.35 L330.4,130.45 Z" fill="#c4c4c4"/>
<path d="M257,141.4 h5.8 M257,142.9 h4 M257,144.4 h5.8 M257,145.9 h4 " stroke="#bcbcbc" stroke-width=".6" fill="none"/>
<path d="M267.8,141.4 h5.8 M267.8,142.9 h5.8 M267.8,144.4 h5.8 M267.8,145.9 h5.8 " stroke="#bcbcbc" stroke-width=".6" fill="none"/>
<path d="M278.6,141.4 h5.8 M278.6,142.9 h5.8 M278.6,144.4 h5.8 M278.6,145.9 h5.8 " stroke="#bcbcbc" stroke-width=".6" fill="none"/>
<path d="M289.2,141.4 h5.8 M289.2,142.9 h5.8 M289.2,144.4 h5.8 M289.2,145.9 h5.8 " stroke="#bcbcbc" stroke-width=".6" fill="none"/>
<rect x="298.4" y="138.6" width=".5" height="9" fill="#dcdcdc"/>
<path d="M302,141.4 h2.4 M302,142.9 h2.4 M302,144.4 h2.4 M302,145.9 h2.4 " stroke="#bcbcbc" stroke-width=".6" fill="none"/>
<path d="M305.6,141.4 h2.4 M305.6,142.9 h2.4 M305.6,144.4 h2.4 M305.6,145.9 h2.4 " stroke="#bcbcbc" stroke-width=".6" fill="none"/>
<path d="M311.5,143.55 L313.3,143.55 L312.4,144.65 Z" fill="#c4c4c4"/>
<path d="M336.6,123.2 v4.6 M338.2,123.2 v4.6 M339.8,123.2 v4.6 M341.4,123.2 v4.6" stroke="#bdbdbd" stroke-width=".5"/><path d="M336,129 h6" stroke="#bdbdbd" stroke-width=".5"/>
<text x="344.5" y="127.6" font-size="5.4" fill="#a9a9a9" textLength="32.3" lengthAdjust="spacingAndGlyphs">Text Direction</text>
<path d="M379.1,125.55 L380.9,125.55 L380,126.65 Z" fill="#c4c4c4"/>
<rect x="336.2" y="133.6" width="5.4" height="5.4" fill="none" stroke="#bdbdbd" stroke-width=".5"/><path d="M337.4,136.2 h3 M338.9,134.6 v3.4" stroke="#bdbdbd" stroke-width=".5"/>
<text x="344.5" y="138.3" font-size="5.4" fill="#a9a9a9" textLength="23.5" lengthAdjust="spacingAndGlyphs">Align Text</text>
<path d="M370.7,136.15 L372.5,136.15 L371.6,137.25 Z" fill="#c4c4c4"/>
<rect x="336" y="144" width="3.2" height="2.4" fill="#c9c9c9"/><rect x="338.2" y="146.6" width="3.6" height="2.6" fill="none" stroke="#bdbdbd" stroke-width=".5"/>
<text x="344.5" y="148.5" font-size="5.4" fill="#a9a9a9" textLength="50.2" lengthAdjust="spacingAndGlyphs">Convert to SmartArt</text>
<path d="M396.7,146.55 L398.5,146.55 L397.6,147.65 Z" fill="#c4c4c4"/>
<text x="312" y="158.6" font-size="5.4" fill="#3a3a3a" textLength="23.6" lengthAdjust="spacingAndGlyphs">Paragraph</text>
<path d="M398.7,155.7 h-1 v3.6 h3.6 v-1" fill="none" stroke="#8a8a8a" stroke-width=".5"/><path d="M399.7,156.7 l2,2 m0,-1.5 v1.5 h-1.5" fill="none" stroke="#8a8a8a" stroke-width=".5"/>
<rect x="407.6" y="121.9" width="61.6" height="26.8" fill="#fdfdfd" stroke="#cfcfcf" stroke-width=".6"/>
<rect x="463.4" y="122.2" width="5.5" height="26.2" fill="#f0f0f0"/><path d="M463.4,130.8 h5.5 M463.4,139.6 h5.5 M463.4,122.2 v26.2" stroke="#d4d4d4" stroke-width=".5"/>
<path d="M465.3,126.15 L467.1,126.15 L466.2,127.25 Z" fill="#c9c9c9"/>
<path d="M465.3,134.95 L467.1,134.95 L466.2,136.05 Z" fill="#555"/>
<path d="M465.3,144.35 L467.1,144.35 L466.2,145.45 Z" fill="#555"/>
<path d="M465.2,142.6 h2" stroke="#555" stroke-width=".5"/>
<rect x="410" y="124" width="5.4" height="5" fill="none" stroke="#5a5a5a" stroke-width=".55"/><text x="411" y="128.2" font-size="3.6" fill="#5a5a5a">A</text>
<path d="M419.4,124 l5.4,5" fill="none" stroke="#5a5a5a" stroke-width=".55"/>
<path d="M428.6,124 l5.4,5 m0,-2 v2 h-2" fill="none" stroke="#5a5a5a" stroke-width=".55"/>
<rect x="437.4" y="124.2" width="6.2" height="4.6" fill="none" stroke="#5a5a5a" stroke-width=".55"/>
<ellipse cx="449.4" cy="126.5" rx="3.2" ry="2.4" fill="none" stroke="#5a5a5a" stroke-width=".55"/>
<rect x="455.6" y="124.2" width="6.2" height="4.6" rx="1.2" fill="none" stroke="#5a5a5a" stroke-width=".55"/>
<path d="M410,138 l2.8,-5.2 l2.8,5.2 z" fill="none" stroke="#5a5a5a" stroke-width=".55"/>
<path d="M419.4,133 h3 v5 h2.6" fill="none" stroke="#5a5a5a" stroke-width=".55"/>
<path d="M428.6,133 h3 v5 h2.4 m-1.2,-1.2 l1.2,1.2 l-1.2,1.2" fill="none" stroke="#5a5a5a" stroke-width=".55"/>
<path d="M437.4,134.2 h3.4 v-1.4 l3,2.6 l-3,2.6 v-1.4 h-3.4 z" fill="none" stroke="#5a5a5a" stroke-width=".55"/>
<path d="M448.2,132.6 h2.4 v3.4 h1.4 l-2.6,3 l-2.6,-3 h1.4 z" fill="none" stroke="#5a5a5a" stroke-width=".55"/>
<path d="M456,138.2 v-3.4 l1.6,-1.8 h3 l1.4,1.6 v3.6 z" fill="none" stroke="#5a5a5a" stroke-width=".55"/>
<path d="M411.6,142 c1.6,0 1.6,2 0,2.4 c2,.2 2,2.6 .4,3 m-.6,-5.4 l.8,5.6" fill="none" stroke="#5a5a5a" stroke-width=".55"/>
<path d="M419.6,142.4 c3.6,0 5,2 5,5" fill="none" stroke="#5a5a5a" stroke-width=".55"/>
<path d="M428.4,147 c1.4,-6 3,-6 4,-2 c.8,3 1.6,3 2.4,1.6" fill="none" stroke="#5a5a5a" stroke-width=".55"/>
<path d="M441.6,142 c-1.2,0 -1,1.2 -1,2 c0,.6 -.6,.8 -1,.8 c.4,0 1,.2 1,.8 c0,.8 -.2,2 1,2" fill="none" stroke="#5a5a5a" stroke-width=".55"/>
<path d="M448.6,142 c1.2,0 1,1.2 1,2 c0,.6 .6,.8 1,.8 c-.4,0 -1,.2 -1,.8 c0,.8 .2,2 -1,2" fill="none" stroke="#5a5a5a" stroke-width=".55"/>
<path d="M458.6,142 l.9,1.9 l2.1,.3 l-1.5,1.5 l.4,2.1 l-1.9,-1 l-1.9,1 l.4,-2.1 l-1.5,-1.5 l2.1,-.3 z" fill="none" stroke="#5a5a5a" stroke-width=".55"/>
<rect x="476" y="122.8" width="5" height="5" fill="#fff" stroke="#8f8f8f" stroke-width=".5"/><rect x="478.8" y="125.6" width="5.2" height="5.2" fill="#f2c45c" stroke="#c9983a" stroke-width=".5"/><rect x="482" y="129" width="4.6" height="4.6" fill="#fff" stroke="#8f8f8f" stroke-width=".5"/>
<text x="472.5" y="143" font-size="5.4" fill="#2a2a2a" textLength="18.3" lengthAdjust="spacingAndGlyphs">Arrange</text>
<path d="M480.6,148.5 L482.6,148.5 L481.6,149.7 Z" fill="#666"/>
<rect x="496.6" y="123.2" width="10.4" height="10" rx="2.2" fill="#f6f6f6" stroke="#d8d8d8" stroke-width=".6"/><path d="M501,132.6 l5,-6.4 l1.4,1 l-5,6.4 z" fill="#cfcfcf"/>
<text x="496" y="143" font-size="5.4" fill="#b5b5b5" textLength="13" lengthAdjust="spacingAndGlyphs">Quick</text>
<text x="494" y="150" font-size="5.4" fill="#b5b5b5" textLength="13.4" lengthAdjust="spacingAndGlyphs">Styles</text>
<path d="M508.7,147.95 L510.5,147.95 L509.6,149.05 Z" fill="#c4c4c4"/>
<path d="M516.4,126.4 l2.4,-2.4 l2.2,2.2 l-2.4,2.4 z M516,128.6 h5" fill="none" stroke="#bdbdbd" stroke-width=".55"/>
<text x="523.4" y="127.6" font-size="5.4" fill="#a9a9a9" textLength="21.6" lengthAdjust="spacingAndGlyphs">Shape Fill</text>
<path d="M547.1,125.55 L548.9,125.55 L548,126.65 Z" fill="#c4c4c4"/>
<path d="M516,138.8 v-4.4 h4 M517.8,137.6 l3.4,-3.8" fill="none" stroke="#bdbdbd" stroke-width=".55"/>
<text x="523.4" y="138.3" font-size="5.4" fill="#a9a9a9" textLength="32.3" lengthAdjust="spacingAndGlyphs">Shape Outline</text>
<path d="M558.1,136.15 L559.9,136.15 L559,137.25 Z" fill="#c4c4c4"/>
<ellipse cx="518.4" cy="146.6" rx="2.6" ry="2" fill="#ededed" stroke="#bdbdbd" stroke-width=".55"/><path d="M516.6,149.2 h4.4" stroke="#cfcfcf" stroke-width=".6"/>
<text x="523.4" y="148.5" font-size="5.4" fill="#a9a9a9" textLength="31.1" lengthAdjust="spacingAndGlyphs">Shape Effects</text>
<path d="M556.5,146.55 L558.3,146.55 L557.4,147.65 Z" fill="#c4c4c4"/>
<text x="472" y="158.6" font-size="5.4" fill="#3a3a3a" textLength="19" lengthAdjust="spacingAndGlyphs">Drawing</text>
<path d="M562,155.7 h-1 v3.6 h3.6 v-1" fill="none" stroke="#8a8a8a" stroke-width=".5"/><path d="M563,156.7 l2,2 m0,-1.5 v1.5 h-1.5" fill="none" stroke="#8a8a8a" stroke-width=".5"/>
<circle cx="576.6" cy="124.8" r="1.6" fill="none" stroke="#3e6db5" stroke-width=".7"/><path d="M575.4,126 l-2.2,2.4" stroke="#3e6db5" stroke-width=".8"/>
<text x="581.2" y="127.6" font-size="5.4" fill="#2a2a2a" textLength="9.6" lengthAdjust="spacingAndGlyphs">Find</text>
<text x="573" y="137.4" font-size="3.8" fill="#3e6db5" textLength="4" lengthAdjust="spacingAndGlyphs">ab</text>
<text x="575.4" y="140.4" font-size="3.8" fill="#444" textLength="4" lengthAdjust="spacingAndGlyphs">ac</text>
<path d="M573.2,139.2 c0,1 .6,1.2 1.4,1.2" fill="none" stroke="#3e6db5" stroke-width=".5"/>
<text x="581.2" y="138.3" font-size="5.4" fill="#2a2a2a" textLength="17.8" lengthAdjust="spacingAndGlyphs">Replace</text>
<path d="M604.7,136.15 L606.5,136.15 L605.6,137.25 Z" fill="#666"/>
<path d="M575,143.6 v5.6 l1.4,-1.2 l1,2.2 l.9,-.4 l-1,-2.2 h1.8 z" fill="#fff" stroke="#555" stroke-width=".5"/>
<text x="581.2" y="148.5" font-size="5.4" fill="#2a2a2a" textLength="13.5" lengthAdjust="spacingAndGlyphs">Select</text>
<path d="M597.1,146.55 L598.9,146.55 L598,147.65 Z" fill="#666"/>
<text x="582" y="158.6" font-size="5.4" fill="#3a3a3a" textLength="16" lengthAdjust="spacingAndGlyphs">Editing</text>
<path d="M856.2,158.2 l2.2,-2.2 l2.2,2.2" fill="none" stroke="#8a8a8a" stroke-width=".6"/>
</g>
<g id="pane" filter="url(#sb)">
<text x="2.6" y="170.4" font-size="7.6" fill="#5a5a5a" textLength="6.8" lengthAdjust="spacingAndGlyphs">12</text>
<text x="2.6" y="256.8" font-size="7.6" fill="#5a5a5a" textLength="6.8" lengthAdjust="spacingAndGlyphs">13</text>
<text x="2.6" y="342.6" font-size="7.6" fill="#5a5a5a" textLength="6.8" lengthAdjust="spacingAndGlyphs">14</text>
<text x="2.6" y="514.6" font-size="7.6" fill="#5a5a5a" textLength="6.8" lengthAdjust="spacingAndGlyphs">16</text>
<text x="2.6" y="428.8" font-size="7.6" fill="#c5482c" textLength="6.8" lengthAdjust="spacingAndGlyphs">15</text>
<rect x="127.8" y="162" width="6.4" height="6" fill="#fdfdfd" stroke="#d6d6d6" stroke-width=".4"/>
<path d="M129.8,165.8 l1.2,-1.6 l1.2,1.6 z" fill="#555"/>
<rect x="127.8" y="239.6" width="6.4" height="28.4" fill="#fff" stroke="#d0d0d0" stroke-width=".4"/>
<rect x="127.8" y="541.6" width="6.4" height="6.4" fill="#fdfdfd" stroke="#d6d6d6" stroke-width=".4"/>
<path d="M129.8,544 l1.2,1.6 l1.2,-1.6 z" fill="#555"/>
<rect x="857.2" y="161.4" width="6.6" height="6.6" fill="#fdfdfd" stroke="#d6d6d6" stroke-width=".4"/>
<path d="M859.3,165.4 l1.2,-1.6 l1.2,1.6 z" fill="#555"/>
<rect x="857.2" y="247.6" width="6.6" height="7" fill="#fff" stroke="#d0d0d0" stroke-width=".4"/>
<rect x="857.2" y="494.8" width="6.6" height="6.6" fill="#fdfdfd" stroke="#d6d6d6" stroke-width=".4"/>
<path d="M859.3,497.4 l1.2,1.6 l1.2,-1.6 z" fill="#555"/>
<rect x="857.2" y="501.6" width="6.6" height="25" fill="#e9e9e9"/>
<path d="M859.4,506.4 l1.1,-1.3 l1.1,1.3 z M859.4,508.2 l1.1,-1.3 l1.1,1.3 z" fill="#666"/>
<path d="M859.4,512 l1.1,1.3 l1.1,-1.3 z M859.4,513.8 l1.1,1.3 l1.1,-1.3 z" fill="#666"/>
<text x="142.4" y="536.6" font-size="6.4" fill="#585858" textLength="52.8" lengthAdjust="spacingAndGlyphs">Click to add notes</text>
</g>
<g id="statusbar" filter="url(#sb)">
<text x="3.6" y="556.2" font-size="5.1" fill="#333" textLength="31.2" lengthAdjust="spacingAndGlyphs">Slide 15 of 58</text>
<rect x="43.6" y="551.6" width="5" height="4.6" fill="none" stroke="#777" stroke-width=".5"/><path d="M45,553.2 h2.4 M45,554.6 h2.4 M49,552.6 l1,-1" stroke="#777" stroke-width=".4"/>
<path d="M631.6,556.6 h4.6 M632.6,556.4 v-3 h2.6 v3 M633.9,553.4 v-1.6" fill="none" stroke="#777" stroke-width=".5"/>
<text x="638.2" y="556.2" font-size="5.1" fill="#333" textLength="13.2" lengthAdjust="spacingAndGlyphs">Notes</text>
<path d="M660.6,551.4 h6 v4 h-3 l-1.4,1.6 v-1.6 h-1.6 z" fill="#555"/>
<text x="668.4" y="556.2" font-size="5.1" fill="#333" textLength="24.4" lengthAdjust="spacingAndGlyphs">Comments</text>
<rect x="701.2" y="549.6" width="17.4" height="9.4" fill="#cbcbcb"/>
<rect x="706.4" y="551.6" width="6.6" height="5.4" fill="none" stroke="#6d6d6d" stroke-width=".5"/><path d="M708.4,551.6 v5.4 M708.4,553.6 h4.6" stroke="#6d6d6d" stroke-width=".4"/>
<path d="M724.4,551.4 h2.6 v1.8 h-2.6 z M728.4,551.4 h2.6 v1.8 h-2.6 z M724.4,554.8 h2.6 v1.8 h-2.6 z M728.4,554.8 h2.6 v1.8 h-2.6 z" fill="none" stroke="#6d6d6d" stroke-width=".5"/>
<path d="M742.8,551.8 c1,-.6 2,-.6 2.9,0 c1,-.6 2,-.6 2.9,0 v4.8 c-1,-.6 -2,-.6 -2.9,0 c-1,-.6 -2,-.6 -2.9,0 z M745.7,551.8 v4.8" fill="none" stroke="#6d6d6d" stroke-width=".5"/>
<path d="M760.8,551.2 h6 M761.6,551.6 v2.6 h4.4 v-2.6 M763.8,554.2 v2.2 M762.2,556.8 h3.2" fill="none" stroke="#6d6d6d" stroke-width=".6"/>
<path d="M775.8,554.2 h2.6" stroke="#666" stroke-width=".6"/>
<path d="M781.8,554.2 h44.2" stroke="#9a9a9a" stroke-width=".6"/>
<rect x="802.9" y="551.4" width="1.6" height="5.6" fill="#555"/>
<path d="M829,554.2 h2.8 M830.4,552.8 v2.8" stroke="#666" stroke-width=".6"/>
<text x="838" y="556.2" font-size="5" fill="#4a4a4a" textLength="9.4" lengthAdjust="spacingAndGlyphs">98%</text>
<rect x="856.4" y="551.4" width="5.4" height="5.4" fill="none" stroke="#6d6d6d" stroke-width=".5"/><path d="M857.6,552.6 l1,1 M860.6,552.6 l-1,1 M857.6,555.6 l1,-1 M860.6,555.6 l-1,-1" stroke="#6d6d6d" stroke-width=".4"/>
</g>
<g id="mic">
<circle cx="781.6" cy="601" r="18.4" fill="#2b2b2b"/>
<rect x="777.8" y="590.8" width="7.4" height="14" rx="3.7" fill="#7d7d7d"/>
<path d="M775,599.6 a6.6,6.6 0 0 0 13.2,0 M781.6,606.2 v4 M777.6,610.4 h8" fill="none" stroke="#7d7d7d" stroke-width="1.3"/>
<path d="M773.4,609.6 L790.6,592.6" stroke="#d2352b" stroke-width="1.3"/>
</g>
</svg>

<svg id="webcam" width="152" height="85.4" viewBox="0 0 152 85.4" style="left:703.6px;top:9.2px">
<defs>
<filter id="cb0" x="-2%" y="-10%" width="104%" height="120%"><feGaussianBlur stdDeviation=".25"/></filter>
<filter id="cb1" x="-10%" y="-10%" width="120%" height="120%"><feGaussianBlur stdDeviation="1.1"/></filter>
<filter id="cb2" x="-10%" y="-10%" width="120%" height="120%"><feGaussianBlur stdDeviation=".55"/></filter>
<filter id="cb3" x="-30%" y="-30%" width="160%" height="160%"><feGaussianBlur stdDeviation="2.2"/></filter>
<linearGradient id="cwall" x1="0" y1="0" x2="1" y2="0"><stop offset="0" stop-color="#a9842a"/><stop offset=".45" stop-color="#cfa640"/><stop offset=".7" stop-color="#dcb858"/><stop offset="1" stop-color="#d3ae50"/></linearGradient>
<linearGradient id="cdrop" x1="0" y1="0" x2=".25" y2="1"><stop offset="0" stop-color="#9b96a6"/><stop offset=".55" stop-color="#8a8594"/><stop offset="1" stop-color="#6c6776"/></linearGradient>
<linearGradient id="cskin" x1="0" y1="0" x2="0" y2="1"><stop offset="0" stop-color="#e0c6b8"/><stop offset=".4" stop-color="#cda18c"/><stop offset=".75" stop-color="#b37a68"/><stop offset="1" stop-color="#9c6354"/></linearGradient>
<clipPath id="ccl"><rect x="0" y="0" width="152" height="85.4"/></clipPath>
</defs>
<g clip-path="url(#ccl)">
<rect width="152" height="85.4" fill="url(#cwall)"/>
<g filter="url(#cb2)">
<polygon points="114.4,13.6 127.5,8.9 138.7,3.3 152.8,1.0 152.8,76.3 114.4,65.5" fill="#d9ceb0"/>
<polygon points="115.5,9.1 116.8,9.1 116.8,19.8 115.5,19.8" fill="#d9d0b4"/><polygon points="116.8,8.0 118.1,8.0 118.1,19.6 116.8,19.6" fill="#7a4a36"/><polygon points="118.1,8.9 119.8,8.9 119.8,19.4 118.1,19.4" fill="#d9d0b4"/><polygon points="119.8,8.4 120.7,8.4 120.7,19.2 119.8,19.2" fill="#cdbf98"/><polygon points="120.7,9.3 122.8,9.3 122.8,19.0 120.7,19.0" fill="#efe7d0"/><polygon points="122.8,8.7 124.1,8.7 124.1,18.7 122.8,18.7" fill="#8a6a3a"/><polygon points="124.1,6.3 125.4,6.3 125.4,18.5 124.1,18.5" fill="#e6dfc6"/><polygon points="125.4,6.3 126.7,6.3 126.7,18.3 125.4,18.3" fill="#b2553a"/><polygon points="126.7,5.9 128.8,5.9 128.8,18.1 126.7,18.1" fill="#5a6a8a"/><polygon points="128.8,5.7 130.9,5.7 130.9,17.7 128.8,17.7" fill="#b5ad95"/><polygon points="130.9,5.7 132.5,5.7 132.5,17.5 130.9,17.5" fill="#c9b98c"/><polygon points="132.5,8.2 134.6,8.2 134.6,17.2 132.5,17.2" fill="#efe7d0"/><polygon points="134.6,8.0 135.5,8.0 135.5,17.0 134.6,17.0" fill="#c4854a"/><polygon points="135.5,8.0 137.6,8.0 137.6,16.8 135.5,16.8" fill="#c9b98c"/><polygon points="137.6,7.4 138.9,7.4 138.9,16.4 137.6,16.4" fill="#c9b98c"/><polygon points="138.9,4.8 139.9,4.8 139.9,16.2 138.9,16.2" fill="#5a6a8a"/><polygon points="139.9,5.2 141.9,5.2 141.9,16.0 139.9,16.0" fill="#d8c684"/><polygon points="141.9,5.5 143.2,5.5 143.2,15.8 141.9,15.8" fill="#d9d0b4"/><polygon points="143.2,5.4 144.2,5.4 144.2,15.7 143.2,15.7" fill="#7a4a36"/><polygon points="144.2,5.0 145.8,5.0 145.8,15.5 144.2,15.5" fill="#b2553a"/><polygon points="145.8,5.4 147.5,5.4 147.5,15.1 145.8,15.1" fill="#b2553a"/><polygon points="147.5,5.5 149.6,5.5 149.6,14.9 147.5,14.9" fill="#8a3a2a"/><polygon points="149.6,3.7 150.5,3.7 150.5,14.5 149.6,14.5" fill="#efe7d0"/>
<polygon points="114.4,19.8 152.8,14.5 152.8,16.2 114.4,21.3" fill="#e9e2cd"/>
<polygon points="115.5,22.2 116.8,22.2 116.8,28.6 115.5,28.6" fill="#b5ad95"/><polygon points="116.8,23.0 118.5,23.0 118.5,28.4 116.8,28.4" fill="#efe7d0"/><polygon points="118.5,22.4 119.8,22.4 119.8,28.2 118.5,28.2" fill="#8a6a3a"/><polygon points="119.8,22.0 121.9,22.0 121.9,28.0 119.8,28.0" fill="#5a6a8a"/><polygon points="121.9,21.1 123.6,21.1 123.6,27.6 121.9,27.6" fill="#cdbf98"/><polygon points="123.6,22.4 125.2,22.4 125.2,27.5 123.6,27.5" fill="#cdbf98"/><polygon points="125.2,21.1 127.3,21.1 127.3,27.3 125.2,27.3" fill="#b2553a"/><polygon points="127.3,21.3 128.6,21.3 128.6,26.9 127.3,26.9" fill="#b2553a"/><polygon points="128.6,20.7 129.9,20.7 129.9,26.9 128.6,26.9" fill="#d8c684"/><polygon points="129.9,21.5 132.0,21.5 132.0,26.7 129.9,26.7" fill="#d8c684"/><polygon points="132.0,20.9 134.0,20.9 134.0,26.3 132.0,26.3" fill="#cdbf98"/><polygon points="134.0,20.0 135.7,20.0 135.7,26.1 134.0,26.1" fill="#8a6a3a"/><polygon points="135.7,19.4 137.8,19.4 137.8,25.8 135.7,25.8" fill="#5a6a8a"/><polygon points="137.8,20.5 139.9,20.5 139.9,25.6 137.8,25.6" fill="#7a4a36"/><polygon points="139.9,20.3 141.9,20.3 141.9,25.2 139.9,25.2" fill="#5a5550"/><polygon points="141.9,19.0 143.2,19.0 143.2,25.0 141.9,25.0" fill="#b2553a"/><polygon points="143.2,19.2 144.2,19.2 144.2,24.8 143.2,24.8" fill="#b2553a"/><polygon points="144.2,19.2 145.1,19.2 145.1,24.6 144.2,24.6" fill="#c9b98c"/><polygon points="145.1,17.5 146.4,17.5 146.4,24.6 145.1,24.6" fill="#d8c684"/><polygon points="146.4,18.8 147.7,18.8 147.7,24.5 146.4,24.5" fill="#d9d0b4"/><polygon points="147.7,18.5 149.0,18.5 149.0,24.3 147.7,24.3" fill="#7a4a36"/><polygon points="149.0,17.2 150.7,17.2 150.7,24.1 149.0,24.1" fill="#c4854a"/>
<polygon points="114.4,28.6 152.8,23.9 152.8,25.6 114.4,30.1" fill="#e9e2cd"/>
<polygon points="115.5,31.6 116.8,31.6 116.8,37.4 115.5,37.4" fill="#b2553a"/><polygon points="116.8,31.8 118.1,31.8 118.1,37.2 116.8,37.2" fill="#efe7d0"/><polygon points="118.1,31.9 119.4,31.9 119.4,37.2 118.1,37.2" fill="#c4854a"/><polygon points="119.4,31.4 121.5,31.4 121.5,37.0 119.4,37.0" fill="#8a3a2a"/><polygon points="121.5,30.8 122.8,30.8 122.8,36.8 121.5,36.8" fill="#d8c684"/><polygon points="122.8,31.6 124.9,31.6 124.9,36.6 122.8,36.6" fill="#e6dfc6"/><polygon points="124.9,30.3 125.8,30.3 125.8,36.4 124.9,36.4" fill="#7a4a36"/><polygon points="125.8,30.4 127.1,30.4 127.1,36.4 125.8,36.4" fill="#5a5550"/><polygon points="127.1,30.1 128.4,30.1 128.4,36.3 127.1,36.3" fill="#b5ad95"/><polygon points="128.4,30.4 129.7,30.4 129.7,36.3 128.4,36.3" fill="#d8c684"/><polygon points="129.7,29.9 131.8,29.9 131.8,36.1 129.7,36.1" fill="#5a6a8a"/><polygon points="131.8,29.3 132.7,29.3 132.7,35.9 131.8,35.9" fill="#d8c684"/><polygon points="132.7,29.9 134.0,29.9 134.0,35.9 132.7,35.9" fill="#7a4a36"/><polygon points="134.0,29.0 136.1,29.0 136.1,35.7 134.0,35.7" fill="#e6dfc6"/><polygon points="136.1,29.7 137.4,29.7 137.4,35.5 136.1,35.5" fill="#cdbf98"/><polygon points="137.4,29.0 138.7,29.0 138.7,35.3 137.4,35.3" fill="#d8c684"/><polygon points="138.7,29.0 140.0,29.0 140.0,35.3 138.7,35.3" fill="#5a5550"/><polygon points="140.0,28.2 141.7,28.2 141.7,35.1 140.0,35.1" fill="#efe7d0"/><polygon points="141.7,28.4 143.8,28.4 143.8,34.9 141.7,34.9" fill="#b5ad95"/><polygon points="143.8,27.6 145.8,27.6 145.8,34.8 143.8,34.8" fill="#c9b98c"/><polygon points="145.8,28.4 147.2,28.4 147.2,34.6 145.8,34.6" fill="#7a4a36"/><polygon points="147.2,27.8 148.5,27.8 148.5,34.4 147.2,34.4" fill="#b5ad95"/><polygon points="148.5,27.8 149.8,27.8 149.8,34.4 148.5,34.4" fill="#b2553a"/><polygon points="149.8,28.0 150.7,28.0 150.7,34.2 149.8,34.2" fill="#5a5550"/>
<polygon points="114.4,37.4 152.8,34.2 152.8,35.9 114.4,38.9" fill="#e9e2cd"/>
<polygon points="115.5,40.2 117.6,40.2 117.6,47.3 115.5,47.3" fill="#7a4a36"/><polygon points="117.6,40.6 118.9,40.6 118.9,47.1 117.6,47.1" fill="#c4854a"/><polygon points="118.9,40.6 119.8,40.6 119.8,47.1 118.9,47.1" fill="#5a5550"/><polygon points="119.8,40.0 121.5,40.0 121.5,47.1 119.8,47.1" fill="#cdbf98"/><polygon points="121.5,41.5 123.6,41.5 123.6,46.9 121.5,46.9" fill="#5a6a8a"/><polygon points="123.6,41.5 124.5,41.5 124.5,46.9 123.6,46.9" fill="#cdbf98"/><polygon points="124.5,40.2 125.8,40.2 125.8,46.7 124.5,46.7" fill="#8a6a3a"/><polygon points="125.8,39.6 127.1,39.6 127.1,46.7 125.8,46.7" fill="#c9b98c"/><polygon points="127.1,40.7 129.2,40.7 129.2,46.7 127.1,46.7" fill="#efe7d0"/><polygon points="129.2,40.9 130.5,40.9 130.5,46.6 129.2,46.6" fill="#5a6a8a"/><polygon points="130.5,38.9 131.8,38.9 131.8,46.6 130.5,46.6" fill="#c4854a"/><polygon points="131.8,39.1 133.9,39.1 133.9,46.4 131.8,46.4" fill="#7a4a36"/><polygon points="133.9,38.7 135.5,38.7 135.5,46.4 133.9,46.4" fill="#d9d0b4"/><polygon points="135.5,39.4 137.6,39.4 137.6,46.2 135.5,46.2" fill="#7a4a36"/><polygon points="137.6,40.4 139.3,40.4 139.3,46.2 137.6,46.2" fill="#c9b98c"/><polygon points="139.3,40.0 140.6,40.0 140.6,46.0 139.3,46.0" fill="#b5ad95"/><polygon points="140.6,37.9 142.3,37.9 142.3,46.0 140.6,46.0" fill="#5a5550"/><polygon points="142.3,39.8 144.0,39.8 144.0,45.8 142.3,45.8" fill="#c9b98c"/><polygon points="144.0,39.3 144.9,39.3 144.9,45.8 144.0,45.8" fill="#efe7d0"/><polygon points="144.9,37.6 145.8,37.6 145.8,45.8 144.9,45.8" fill="#c4854a"/><polygon points="145.8,38.1 146.8,38.1 146.8,45.6 145.8,45.6" fill="#8a6a3a"/><polygon points="146.8,38.5 147.7,38.5 147.7,45.6 146.8,45.6" fill="#c4854a"/><polygon points="147.7,38.7 149.8,38.7 149.8,45.6 147.7,45.6" fill="#7a4a36"/><polygon points="149.8,38.9 151.8,38.9 151.8,45.4 149.8,45.4" fill="#cdbf98"/>
<polygon points="114.4,47.3 152.8,45.4 152.8,47.1 114.4,48.8" fill="#e9e2cd"/>
<polygon points="115.5,50.3 116.4,50.3 116.4,56.7 115.5,56.7" fill="#7a4a36"/><polygon points="116.4,51.2 117.8,51.2 117.8,56.7 116.4,56.7" fill="#8a3a2a"/><polygon points="117.8,50.5 119.1,50.5 119.1,56.7 117.8,56.7" fill="#8a3a2a"/><polygon points="119.1,51.8 120.4,51.8 120.4,56.7 119.1,56.7" fill="#e6dfc6"/><polygon points="120.4,51.8 121.3,51.8 121.3,56.7 120.4,56.7" fill="#d9d0b4"/><polygon points="121.3,51.2 123.0,51.2 123.0,56.7 121.3,56.7" fill="#8a3a2a"/><polygon points="123.0,50.7 124.3,50.7 124.3,56.7 123.0,56.7" fill="#d8c684"/><polygon points="124.3,49.9 126.0,49.9 126.0,56.7 124.3,56.7" fill="#e6dfc6"/><polygon points="126.0,50.9 127.7,50.9 127.7,56.7 126.0,56.7" fill="#5a5550"/><polygon points="127.7,50.5 129.7,50.5 129.7,56.7 127.7,56.7" fill="#8a6a3a"/><polygon points="129.7,49.7 131.0,49.7 131.0,56.7 129.7,56.7" fill="#8a3a2a"/><polygon points="131.0,51.6 132.0,51.6 132.0,56.7 131.0,56.7" fill="#d9d0b4"/><polygon points="132.0,49.7 132.9,49.7 132.9,56.7 132.0,56.7" fill="#8a6a3a"/><polygon points="132.9,50.9 135.0,50.9 135.0,56.7 132.9,56.7" fill="#cdbf98"/><polygon points="135.0,50.1 136.7,50.1 136.7,56.7 135.0,56.7" fill="#b5ad95"/><polygon points="136.7,49.6 138.0,49.6 138.0,56.7 136.7,56.7" fill="#cdbf98"/><polygon points="138.0,49.7 138.9,49.7 138.9,56.7 138.0,56.7" fill="#5a5550"/><polygon points="138.9,49.9 141.0,49.9 141.0,56.7 138.9,56.7" fill="#5a6a8a"/><polygon points="141.0,50.9 142.3,50.9 142.3,56.7 141.0,56.7" fill="#b5ad95"/><polygon points="142.3,51.2 143.6,51.2 143.6,56.7 142.3,56.7" fill="#d8c684"/><polygon points="143.6,50.9 144.5,50.9 144.5,56.7 143.6,56.7" fill="#e6dfc6"/><polygon points="144.5,49.7 145.8,49.7 145.8,56.7 144.5,56.7" fill="#cdbf98"/><polygon points="145.8,50.9 146.8,50.9 146.8,56.7 145.8,56.7" fill="#8a3a2a"/><polygon points="146.8,49.2 148.1,49.2 148.1,56.7 146.8,56.7" fill="#5a6a8a"/><polygon points="148.1,50.9 149.0,50.9 149.0,56.7 148.1,56.7" fill="#c4854a"/><polygon points="149.0,49.6 151.1,49.6 151.1,56.7 149.0,56.7" fill="#b5ad95"/>
<polygon points="114.4,56.7 152.8,56.7 152.8,58.4 114.4,58.2" fill="#e9e2cd"/>
<polygon points="115.5,60.2 117.2,60.2 117.2,65.5 115.5,65.5" fill="#cdbf98"/><polygon points="117.2,60.8 118.1,60.8 118.1,65.7 117.2,65.7" fill="#d9d0b4"/><polygon points="118.1,60.8 119.8,60.8 119.8,65.7 118.1,65.7" fill="#c9b98c"/><polygon points="119.8,61.2 121.5,61.2 121.5,65.8 119.8,65.8" fill="#e6dfc6"/><polygon points="121.5,60.2 122.4,60.2 122.4,66.0 121.5,66.0" fill="#b2553a"/><polygon points="122.4,59.9 123.7,59.9 123.7,66.0 122.4,66.0" fill="#c4854a"/><polygon points="123.7,59.9 125.8,59.9 125.8,66.2 123.7,66.2" fill="#5a5550"/><polygon points="125.8,60.0 127.1,60.0 127.1,66.4 125.8,66.4" fill="#e6dfc6"/><polygon points="127.1,59.5 128.8,59.5 128.8,66.4 127.1,66.4" fill="#c9b98c"/><polygon points="128.8,61.5 130.5,61.5 130.5,66.6 128.8,66.6" fill="#b2553a"/><polygon points="130.5,60.8 131.4,60.8 131.4,66.8 130.5,66.8" fill="#7a4a36"/><polygon points="131.4,59.5 132.7,59.5 132.7,66.8 131.4,66.8" fill="#c9b98c"/><polygon points="132.7,59.7 134.8,59.7 134.8,67.0 132.7,67.0" fill="#b5ad95"/><polygon points="134.8,59.9 136.9,59.9 136.9,67.2 134.8,67.2" fill="#b5ad95"/><polygon points="136.9,60.4 138.9,60.4 138.9,67.3 136.9,67.3" fill="#d9d0b4"/><polygon points="138.9,60.6 139.9,60.6 139.9,67.5 138.9,67.5" fill="#b2553a"/><polygon points="139.9,60.2 141.5,60.2 141.5,67.5 139.9,67.5" fill="#c4854a"/><polygon points="141.5,59.7 142.8,59.7 142.8,67.7 141.5,67.7" fill="#b5ad95"/><polygon points="142.8,59.9 144.9,59.9 144.9,67.9 142.8,67.9" fill="#d8c684"/><polygon points="144.9,59.5 146.6,59.5 146.6,68.1 144.9,68.1" fill="#c4854a"/><polygon points="146.6,60.6 147.5,60.6 147.5,68.1 146.6,68.1" fill="#5a6a8a"/><polygon points="147.5,60.4 148.5,60.4 148.5,68.3 147.5,68.3" fill="#e6dfc6"/><polygon points="148.5,60.0 150.1,60.0 150.1,68.3 148.5,68.3" fill="#d8c684"/>
<polygon points="114.4,65.5 152.8,68.5 152.8,70.1 114.4,67.0" fill="#e9e2cd"/>
<polygon points="127.5,27.5 129.4,27.5 129.4,34.2 127.5,34.2" fill="#2a9a6a"/><polygon points="129.4,26.0 130.9,26.0 130.9,34.0 129.4,34.0" fill="#1f8a5a"/><polygon points="130.9,26.7 132.7,26.7 132.7,33.8 130.9,33.8" fill="#2a9a6a"/><polygon points="132.7,26.1 134.2,26.1 134.2,33.6 132.7,33.6" fill="#1f8a5a"/><polygon points="134.2,27.5 136.1,27.5 136.1,33.3 134.2,33.3" fill="#2f8f62"/>
<polygon points="146.2,1.4 148.8,1.0 148.8,75.4 146.2,73.5" fill="#e8dfc6"/>
<polygon points="82.9,13.6 114.4,13.6 114.4,65.5 82.9,65.5" fill="#b7812f"/>
<polygon points="84.8,19.4 85.7,19.4 85.7,25.4 84.8,25.4" fill="#8a3a26"/><polygon points="85.7,20.0 87.0,20.0 87.0,25.4 85.7,25.4" fill="#b0603a"/><polygon points="87.0,19.8 88.0,19.8 88.0,25.4 87.0,25.4" fill="#e4dab8"/><polygon points="88.0,20.3 88.9,20.3 88.9,25.4 88.0,25.4" fill="#a89872"/><polygon points="88.9,20.7 91.0,20.7 91.0,25.4 88.9,25.4" fill="#cdbd90"/><polygon points="91.0,20.5 91.9,20.5 91.9,25.4 91.0,25.4" fill="#55504a"/><polygon points="91.9,19.8 93.6,19.8 93.6,25.4 91.9,25.4" fill="#a89872"/><polygon points="93.6,20.7 95.7,20.7 95.7,25.4 93.6,25.4" fill="#a89872"/><polygon points="95.7,20.0 97.3,20.0 97.3,25.4 95.7,25.4" fill="#d6c89e"/><polygon points="97.3,19.4 98.7,19.4 98.7,25.4 97.3,25.4" fill="#a89872"/>
<polygon points="101.3,20.3 103.0,20.3 103.0,25.4 101.3,25.4" fill="#8a3a26"/><polygon points="103.0,20.3 105.0,20.3 105.0,25.4 103.0,25.4" fill="#55504a"/><polygon points="105.0,20.7 106.3,20.7 106.3,25.4 105.0,25.4" fill="#55504a"/><polygon points="106.3,20.3 108.0,20.3 108.0,25.4 106.3,25.4" fill="#e4dab8"/><polygon points="108.0,19.4 109.3,19.4 109.3,25.4 108.0,25.4" fill="#dccfa8"/><polygon points="109.3,19.8 110.3,19.8 110.3,25.4 109.3,25.4" fill="#b0603a"/><polygon points="110.3,19.4 111.9,19.4 111.9,25.4 110.3,25.4" fill="#c4723a"/><polygon points="111.9,19.2 112.9,19.2 112.9,25.4 111.9,25.4" fill="#b0603a"/><polygon points="112.9,21.1 114.6,21.1 114.6,25.4 112.9,25.4" fill="#d6c89e"/>
<polygon points="82.9,25.4 114.4,25.4 114.4,27.1 82.9,27.1" fill="#c6903c"/>
<polygon points="84.8,28.2 85.7,28.2 85.7,33.3 84.8,33.3" fill="#55504a"/><polygon points="85.7,28.0 86.7,28.0 86.7,33.3 85.7,33.3" fill="#d8bf78"/><polygon points="86.7,28.2 88.7,28.2 88.7,33.3 86.7,33.3" fill="#b0603a"/><polygon points="88.7,28.6 90.8,28.6 90.8,33.3 88.7,33.3" fill="#c4723a"/><polygon points="90.8,29.1 92.8,29.1 92.8,33.3 90.8,33.3" fill="#dccfa8"/><polygon points="92.8,29.1 94.9,29.1 94.9,33.3 92.8,33.3" fill="#6a4a2a"/><polygon points="94.9,27.8 96.2,27.8 96.2,33.3 94.9,33.3" fill="#6a4a2a"/><polygon points="96.2,28.8 97.2,28.8 97.2,33.3 96.2,33.3" fill="#6a4a2a"/><polygon points="97.2,27.6 98.8,27.6 98.8,33.3 97.2,33.3" fill="#cdbd90"/>
<polygon points="101.3,28.2 103.3,28.2 103.3,33.3 101.3,33.3" fill="#a89872"/><polygon points="103.3,28.2 105.4,28.2 105.4,33.3 103.3,33.3" fill="#cdbd90"/><polygon points="105.4,29.1 107.1,29.1 107.1,33.3 105.4,33.3" fill="#6a4a2a"/><polygon points="107.1,29.1 108.4,29.1 108.4,33.3 107.1,33.3" fill="#a89872"/><polygon points="108.4,29.3 110.1,29.3 110.1,33.3 108.4,33.3" fill="#cdbd90"/><polygon points="110.1,28.8 111.4,28.8 111.4,33.3 110.1,33.3" fill="#c4723a"/><polygon points="111.4,27.6 113.1,27.6 113.1,33.3 111.4,33.3" fill="#6a4a2a"/><polygon points="113.1,27.8 115.1,27.8 115.1,33.3 113.1,33.3" fill="#8a3a26"/>
<polygon points="82.9,33.3 114.4,33.3 114.4,34.9 82.9,34.9" fill="#c6903c"/>
<polygon points="84.8,36.1 86.9,36.1 86.9,40.7 84.8,40.7" fill="#55504a"/><polygon points="86.9,36.8 88.2,36.8 88.2,40.7 86.9,40.7" fill="#55504a"/><polygon points="88.2,36.4 89.1,36.4 89.1,40.7 88.2,40.7" fill="#a89872"/><polygon points="89.1,35.7 90.0,35.7 90.0,40.7 89.1,40.7" fill="#d8bf78"/><polygon points="90.0,36.6 91.3,36.6 91.3,40.7 90.0,40.7" fill="#cdbd90"/><polygon points="91.3,35.7 92.7,35.7 92.7,40.7 91.3,40.7" fill="#d8bf78"/><polygon points="92.7,36.8 94.7,36.8 94.7,40.7 92.7,40.7" fill="#a89872"/><polygon points="94.7,36.3 95.7,36.3 95.7,40.7 94.7,40.7" fill="#b0603a"/><polygon points="95.7,36.3 97.7,36.3 97.7,40.7 95.7,40.7" fill="#a89872"/><polygon points="97.7,35.5 99.4,35.5 99.4,40.7 97.7,40.7" fill="#e4dab8"/>
<polygon points="101.3,36.3 103.3,36.3 103.3,40.7 101.3,40.7" fill="#6a4a2a"/><polygon points="103.3,36.4 104.3,36.4 104.3,40.7 103.3,40.7" fill="#6a4a2a"/><polygon points="104.3,36.6 106.3,36.6 106.3,40.7 104.3,40.7" fill="#cdbd90"/><polygon points="106.3,36.1 107.3,36.1 107.3,40.7 106.3,40.7" fill="#c4723a"/><polygon points="107.3,36.1 108.2,36.1 108.2,40.7 107.3,40.7" fill="#dccfa8"/><polygon points="108.2,36.3 109.5,36.3 109.5,40.7 108.2,40.7" fill="#8a3a26"/><polygon points="109.5,35.7 110.4,35.7 110.4,40.7 109.5,40.7" fill="#55504a"/><polygon points="110.4,36.6 112.5,36.6 112.5,40.7 110.4,40.7" fill="#a89872"/><polygon points="112.5,35.9 114.6,35.9 114.6,40.7 112.5,40.7" fill="#b0603a"/>
<polygon points="82.9,40.7 114.4,40.7 114.4,42.4 82.9,42.4" fill="#c6903c"/>
<polygon points="84.8,45.4 85.7,45.4 85.7,50.1 84.8,50.1" fill="#a89872"/><polygon points="85.7,45.4 87.0,45.4 87.0,50.1 85.7,50.1" fill="#dccfa8"/><polygon points="87.0,44.3 88.7,44.3 88.7,50.1 87.0,50.1" fill="#8a3a26"/><polygon points="88.7,44.9 90.0,44.9 90.0,50.1 88.7,50.1" fill="#d6c89e"/><polygon points="90.0,45.2 91.3,45.2 91.3,50.1 90.0,50.1" fill="#c4723a"/><polygon points="91.3,44.3 93.0,44.3 93.0,50.1 91.3,50.1" fill="#dccfa8"/><polygon points="93.0,44.7 95.1,44.7 95.1,50.1 93.0,50.1" fill="#a89872"/><polygon points="95.1,44.9 96.0,44.9 96.0,50.1 95.1,50.1" fill="#d6c89e"/><polygon points="96.0,44.3 98.1,44.3 98.1,50.1 96.0,50.1" fill="#b0603a"/><polygon points="98.1,45.2 99.4,45.2 99.4,50.1 98.1,50.1" fill="#55504a"/>
<polygon points="101.3,45.1 102.2,45.1 102.2,50.1 101.3,50.1" fill="#6a4a2a"/><polygon points="102.2,43.6 103.1,43.6 103.1,50.1 102.2,50.1" fill="#dccfa8"/><polygon points="103.1,44.5 104.8,44.5 104.8,50.1 103.1,50.1" fill="#55504a"/><polygon points="104.8,44.7 106.1,44.7 106.1,50.1 104.8,50.1" fill="#dccfa8"/><polygon points="106.1,45.1 107.1,45.1 107.1,50.1 106.1,50.1" fill="#c4723a"/><polygon points="107.1,44.3 108.0,44.3 108.0,50.1 107.1,50.1" fill="#d6c89e"/><polygon points="108.0,45.2 110.1,45.2 110.1,50.1 108.0,50.1" fill="#b0603a"/><polygon points="110.1,43.9 111.0,43.9 111.0,50.1 110.1,50.1" fill="#cdbd90"/><polygon points="111.0,45.1 113.1,45.1 113.1,50.1 111.0,50.1" fill="#8a3a26"/><polygon points="113.1,45.1 114.4,45.1 114.4,50.1 113.1,50.1" fill="#e4dab8"/>
<polygon points="82.9,50.1 114.4,50.1 114.4,51.8 82.9,51.8" fill="#c6903c"/>
<polygon points="84.8,52.5 86.9,52.5 86.9,58.5 84.8,58.5" fill="#dccfa8"/><polygon points="86.9,54.0 88.2,54.0 88.2,58.5 86.9,58.5" fill="#a89872"/><polygon points="88.2,54.0 89.9,54.0 89.9,58.5 88.2,58.5" fill="#dccfa8"/><polygon points="89.9,53.7 91.2,53.7 91.2,58.5 89.9,58.5" fill="#55504a"/><polygon points="91.2,53.5 92.1,53.5 92.1,58.5 91.2,58.5" fill="#a89872"/><polygon points="92.1,52.7 93.8,52.7 93.8,58.5 92.1,58.5" fill="#e4dab8"/><polygon points="93.8,53.9 95.1,53.9 95.1,58.5 93.8,58.5" fill="#6a4a2a"/><polygon points="95.1,53.9 96.4,53.9 96.4,58.5 95.1,58.5" fill="#b0603a"/><polygon points="96.4,53.5 98.5,53.5 98.5,58.5 96.4,58.5" fill="#d8bf78"/>
<polygon points="101.3,53.9 102.6,53.9 102.6,58.5 101.3,58.5" fill="#c4723a"/><polygon points="102.6,54.0 104.6,54.0 104.6,58.5 102.6,58.5" fill="#cdbd90"/><polygon points="104.6,53.7 106.3,53.7 106.3,58.5 104.6,58.5" fill="#6a4a2a"/><polygon points="106.3,54.0 107.3,54.0 107.3,58.5 106.3,58.5" fill="#b0603a"/><polygon points="107.3,53.7 108.2,53.7 108.2,58.5 107.3,58.5" fill="#e4dab8"/><polygon points="108.2,52.4 109.5,52.4 109.5,58.5 108.2,58.5" fill="#a89872"/><polygon points="109.5,52.4 111.2,52.4 111.2,58.5 109.5,58.5" fill="#6a4a2a"/><polygon points="111.2,53.1 112.9,53.1 112.9,58.5 111.2,58.5" fill="#dccfa8"/><polygon points="112.9,53.7 114.9,53.7 114.9,58.5 112.9,58.5" fill="#e4dab8"/>
<polygon points="82.9,58.5 114.4,58.5 114.4,60.2 82.9,60.2" fill="#c6903c"/>
<polygon points="84.8,61.2 86.9,61.2 86.9,65.5 84.8,65.5" fill="#d6c89e"/><polygon points="86.9,61.2 88.9,61.2 88.9,65.5 86.9,65.5" fill="#6a4a2a"/><polygon points="88.9,61.7 90.2,61.7 90.2,65.5 88.9,65.5" fill="#6a4a2a"/><polygon points="90.2,60.4 91.5,60.4 91.5,65.5 90.2,65.5" fill="#cdbd90"/><polygon points="91.5,61.0 92.8,61.0 92.8,65.5 91.5,65.5" fill="#d8bf78"/><polygon points="92.8,61.2 93.8,61.2 93.8,65.5 92.8,65.5" fill="#d8bf78"/><polygon points="93.8,60.6 95.5,60.6 95.5,65.5 93.8,65.5" fill="#d6c89e"/><polygon points="95.5,61.7 96.4,61.7 96.4,65.5 95.5,65.5" fill="#b0603a"/><polygon points="96.4,61.5 97.7,61.5 97.7,65.5 96.4,65.5" fill="#cdbd90"/><polygon points="97.7,60.4 99.0,60.4 99.0,65.5 97.7,65.5" fill="#c4723a"/>
<polygon points="101.3,61.0 102.6,61.0 102.6,65.5 101.3,65.5" fill="#55504a"/><polygon points="102.6,61.2 104.3,61.2 104.3,65.5 102.6,65.5" fill="#dccfa8"/><polygon points="104.3,61.7 105.6,61.7 105.6,65.5 104.3,65.5" fill="#dccfa8"/><polygon points="105.6,60.8 107.3,60.8 107.3,65.5 105.6,65.5" fill="#e4dab8"/><polygon points="107.3,60.4 108.2,60.4 108.2,65.5 107.3,65.5" fill="#cdbd90"/><polygon points="108.2,60.4 110.3,60.4 110.3,65.5 108.2,65.5" fill="#a89872"/><polygon points="110.3,61.5 111.6,61.5 111.6,65.5 110.3,65.5" fill="#6a4a2a"/><polygon points="111.6,61.9 113.3,61.9 113.3,65.5 111.6,65.5" fill="#e4dab8"/>
<polygon points="82.9,65.5 114.4,65.5 114.4,67.2 82.9,67.2" fill="#c6903c"/>
<polygon points="98.7,14.5 101.1,14.5 101.1,65.5 98.7,65.5" fill="#c0893a"/>
<polygon points="82.2,13.0 115.1,13.0 115.1,18.3 82.2,18.3" fill="#a57428"/>
</g>
<polygon points="81.6,12.7 152.8,0.5 152.8,76.3 81.6,66.0" fill="#d6b468" opacity="0.28"/>
<polygon points="90.0,-2.3 116.3,-2.3 118.1,18.3 88.2,18.3" fill="#f3dc8a" opacity="0.55" filter="url(#cb3)"/>
<polygon points="94.7,-2.3 110.6,-2.3 110.6,13.8 94.7,13.8" fill="#fffdf2" filter="url(#cb2)"/>
<g filter="url(#cb2)">
<polygon points="1.1,1.8 74.1,10.4 74.9,65.8 1.1,65.8" fill="url(#cdrop)"/>
<polygon points="73.6,9.7 75.4,10.0 75.4,21.1 73.9,21.1" fill="#3a3026" opacity="0.85"/>
<polygon points="1.3,1.4 5.0,2.2 4.6,7.4 2.0,7.0" fill="#4a4034" opacity="0.8"/>
<polygon points="0.1,7.0 2.8,7.0 2.8,65.8 0.1,65.8" fill="#5f5a66" opacity="0.6"/>
</g>
<g filter="url(#cb2)">
<polygon points="100.2,67 103,65.4 106.4,64.3 112.4,63.8 117,65 121.1,66.8 129.8,70.3 137.4,73.8 144,75 152,75.2 152,86 100.2,86" fill="#2c241b"/>
<polygon points="101,68 106.4,65.2 112.4,64.8 118,66.4 110,69 104,72" fill="#40352a" opacity=".8"/>
<polygon points="127,86 131.6,80.7 138.6,77.3 146,76.2 152,76 152,86" fill="#151a1c"/>
<path d="M127.6,85.4 L131.8,80.8 L138.6,77.5" fill="none" stroke="#8a7436" stroke-width=".5"/>
</g>
<g filter="url(#cb2)">
<polygon points="24.5,85.7 28.2,70.7 33.9,64.7 43.2,60.6 54.5,58.4 82.5,58.4 93.8,61.0 99.8,65.5 102.4,76.3 103.1,85.7" fill="#a6a79b"/>
<polygon points="58.2,57.6 78.8,57.6 80.7,85.7 56.3,85.7" fill="#8f9086" opacity="0.7"/>
<polygon points="58.2,57.6 78.8,57.6 78.1,67.0 59.3,67.0" fill="#9a6655"/>
<path d="M52.6,39.8 C52.2,27.6 58.2,22.0 68.5,22.0 C78.8,22.0 84.8,28.0 84.4,40.7 C84.4,52.0 80.7,61.3 75.1,65.5 L61.9,65.5 C56.3,61.3 53.0,52.0 52.6,39.8 Z" fill="url(#cskin)"/>
<ellipse cx="68.5" cy="30.4" rx="11" ry="6" fill="#ecd8cc" opacity=".7"/>
<path d="M50.3,37.9 C51.1,26.7 58.2,20.9 68.5,20.9 C78.8,20.9 85.2,27.3 85.2,42.6" fill="none" stroke="#1a1a1a" stroke-width="1.5"/>
<rect x="46.6" y="35.5" width="7" height="15" rx="3.2" fill="#151515"/>
<rect x="81.0" y="41.3" width="5.8" height="12" rx="2.8" fill="#151515"/>
<path d="M50.7,49.7 C50.0,55.7 51.1,60.4 53.3,64.7" fill="none" stroke="#222" stroke-width=".9"/>
<rect x="55.2" y="41.9" width="11.4" height="7.4" rx="1.8" fill="#a88070" fill-opacity=".45" stroke="#33261f" stroke-width="1"/>
<rect x="70.2" y="42.2" width="11.4" height="7.4" rx="1.8" fill="#a88070" fill-opacity=".45" stroke="#33261f" stroke-width="1"/>
<path d="M52.6,42.6 L55.6,43.0 M66.6,43.7 L70.2,43.9 M81.6,43.7 L84.4,43.0" stroke="#33261f" stroke-width=".9" fill="none"/>
<path d="M67.6,49.2 C66.1,52.9 66.4,55.4 69.1,55.7" stroke="#8e5a4a" stroke-width=".8" fill="none"/>
<path d="M63.4,60.6 C66.6,59.5 71.3,59.5 74.7,61.0" stroke="#6e3630" stroke-width="1.2" fill="none"/>
</g>
<rect x="20" y="65.7" width="80.6" height="19.7" fill="#333" fill-opacity=".74"/>
<rect x="26.2" y="69" width="5" height="8.8" rx="2.5" fill="#3fd43a"/>
<path d="M24.4,74.6 a4.3,4.3 0 0 0 8.6,0 M28.7,79 v2.2 M26.2,81.4 h5" fill="none" stroke="#f2f2f2" stroke-width="1"/>
<g filter="url(#cb0)"><text x="37.2" y="79.2" font-size="10.6" fill="#f4f4f4" textLength="60.2" lengthAdjust="spacingAndGlyphs">Elliott Shaw</text></g>
</g>
<path d="M.5,85.4 V.5 H151.5 V85.4" fill="none" stroke="#c99a2a" stroke-width="1" stroke-opacity=".9"/>
<rect x="0" y="65.7" width="20.2" height="19.7" fill="#1a6cf2"/>
<circle cx="10" cy="72.8" r="3.2" fill="#fff"/><path d="M3.8,81.8 C4.4,75.4 15.6,75.4 16.2,81.8 Z" fill="#fff"/>
</svg>
</body>
</html>
